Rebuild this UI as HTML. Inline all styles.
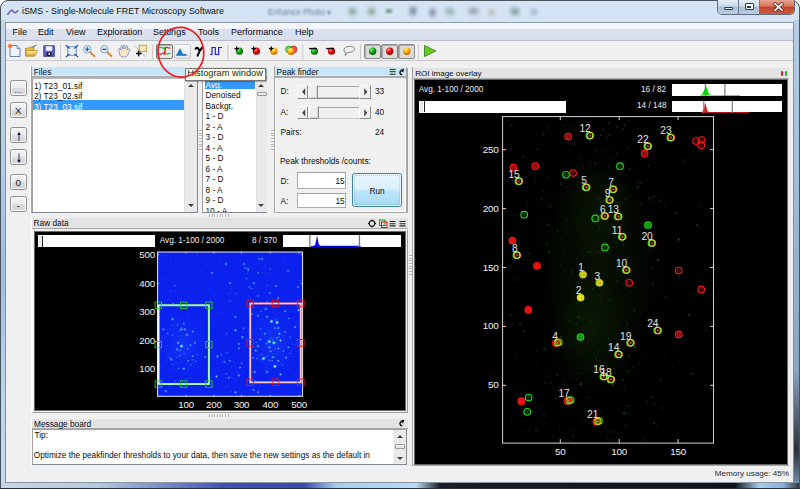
<!DOCTYPE html>
<html><head><meta charset="utf-8">
<style>
*{margin:0;padding:0;box-sizing:border-box}
html,body{width:800px;height:489px;overflow:hidden;background:#fff}
body{position:relative;font-family:"Liberation Sans",sans-serif;font-size:8.2px;color:#000}
.a{position:absolute}
.t{position:absolute;white-space:nowrap;line-height:1}
#win{left:0;top:0;width:800px;height:489px;border-radius:8px 8px 0 0;background:linear-gradient(#d4e4f4 0%,#bfd5ec 100%);border:1px solid #4a525c}
#client{left:5px;top:22px;width:789px;height:460.5px;background:#f0f0f0;border-top:1px solid #8d9aab;border-left:1px solid #7f8ea0;border-right:1px solid #7f8ea0;border-bottom:1px solid #8a96a4}
.menu{left:6px;top:23px;width:787px;height:18px;background:linear-gradient(#f7f8fb 0%,#f3f4f9 35%,#dde2ef 38%,#d9deee 100%);border-bottom:1px solid #b7bcc8}
.mi{top:27.8px;font-size:9.05px;color:#0a0a14}
.tb{left:6px;top:42px;width:787px;height:19px;background:#f0f0f0;border-bottom:1px solid #c9c9c9}
.sep{top:45px;width:1px;height:14px;background:#b6b6b6;border-right:1px solid #fff}
.pbtn{top:43.5px;height:15.5px;border:1px solid #8a8a8a;border-radius:2px;background:#dcdcdc;box-shadow:inset 1px 1px 1px #aaa}
.hbtn{top:43.5px;height:15.5px;border:1px solid #b9b9b9;border-radius:2px;background:linear-gradient(#f6f6f6,#e4e4e4)}
</style></head><body>
<div id="win" class="a"></div>
<div class="a" style="left:1px;top:20px;width:4.5px;height:468px;background:linear-gradient(#c2d8ee 0%,#b4cde8 30%,#9fbddf 55%,#b9d2ec 75%,#c6dcf0 100%)"></div>
<div class="a" style="left:794px;top:20px;width:5px;height:468px;background:linear-gradient(#b6cfe8 0%,#9fb8d4 40%,#8aa4c2 75%,#2a3038 92%,#7e9ab8 100%)"></div>
<div class="a" style="left:1px;top:482.5px;width:798px;height:5.5px;background:linear-gradient(90deg,#c8d6e4 0%,#b8c8dc 12%,#4050b8 28%,#3848b0 38%,#a8cdf0 42%,#b8daf6 52%,#1a1e24 55%,#101418 92%,#a8cdf0 95%,#8ab0d8 98%,#303840 100%)"></div>
<div class="a" style="left:0;top:487.5px;width:800px;height:1.5px;background:#2a3038"></div>
<!-- title -->
<div class="a" style="left:0;top:0;width:800px;height:22px;overflow:hidden">
<div class="t" style="left:268px;top:7.5px;font-size:8.3px;color:#6a7a92;filter:blur(1.1px)">Enhance Photo ▾</div>
<div class="a" style="left:349px;top:8px;width:7px;height:7px;border-radius:3px;background:#4a7a50;filter:blur(1.9px);opacity:.6"></div>
<div class="a" style="left:368px;top:8px;width:7px;height:7px;border-radius:3px;background:#5a7a40;filter:blur(1.9px);opacity:.6"></div>
<div class="a" style="left:386px;top:9px;width:6px;height:4px;background:#7aa080;filter:blur(1px)"></div>
<div class="a" style="left:410px;top:7px;width:6px;height:8px;background:#3a4a5a;filter:blur(1.9px);opacity:.6"></div>
<div class="a" style="left:430px;top:9px;width:5px;height:7px;background:#303848;filter:blur(1.9px);opacity:.6"></div>
<div class="a" style="left:446px;top:8px;width:8px;height:7px;background:#6a9a80;filter:blur(1.9px);opacity:.6"></div>
<div class="a" style="left:469px;top:8px;width:9px;height:6px;background:#6a7080;filter:blur(1.9px);opacity:.6"></div>
<div class="a" style="left:489px;top:10px;width:5px;height:5px;background:#a08060;filter:blur(1.9px);opacity:.6"></div>
<div class="a" style="left:511px;top:8px;width:8px;height:7px;background:#4a7a60;filter:blur(1.9px);opacity:.6"></div>
<div class="a" style="left:531px;top:9px;width:6px;height:6px;border-radius:3px;background:#6080a0;filter:blur(1.9px);opacity:.6"></div>
</div>

<svg class="a" style="left:6.5px;top:6.5px" width="14" height="10" viewBox="0 0 14 10"><path d="M0.8 7.3 L4 3.6 Q5 2.6 6 4 Q7.3 6.3 8.8 5.4 L10.8 3.8" fill="none" stroke="#6a58a8" stroke-width="1.5" stroke-linecap="round"/></svg>
<div class="t" style="left:22px;top:6.6px;font-size:8.85px;color:#111">iSMS - Single-Molecule FRET Microscopy Software</div>
<!-- caption buttons -->
<div class="a" style="left:717px;top:0;width:78px;height:15px;border:1px solid #5e6c7e;border-top:none;border-radius:0 0 5px 5px;overflow:hidden;box-shadow:0 0 1px rgba(255,255,255,.6)">
  <div class="a" style="left:0;top:0;width:21px;height:14px;background:linear-gradient(#e4edf6 0%,#c9d8e8 45%,#a9bed6 50%,#b7cde4 100%);border-right:1px solid #6a7a8c"></div>
  <div class="a" style="left:21px;top:0;width:21px;height:14px;background:linear-gradient(#e4edf6 0%,#c9d8e8 45%,#a9bed6 50%,#b7cde4 100%);border-right:1px solid #6a7a8c"></div>
  <div class="a" style="left:42px;top:0;width:36px;height:14px;background:linear-gradient(#eaa595 0%,#d8735e 45%,#c4432a 50%,#cf5a40 100%)"></div>
  <div class="a" style="left:6px;top:6.5px;width:9px;height:3.5px;background:#fff;border:1px solid #2e3d52;border-radius:1px"></div>
  <div class="a" style="left:26.5px;top:3px;width:9px;height:7px;border:1px solid #2e3d52;background:#fff;border-radius:1px"><div class="a" style="left:1.5px;top:1.5px;width:4px;height:2.5px;border:1px solid #2e3d52;background:#e8eef6"></div></div>
  <svg class="a" style="left:54px;top:2px" width="13" height="10" viewBox="0 0 13 10"><path d="M3 1.8 L10 8.2 M10 1.8 L3 8.2" stroke="#4a2018" stroke-width="3.2" stroke-linecap="square"/><path d="M3 1.8 L10 8.2 M10 1.8 L3 8.2" stroke="#fff" stroke-width="1.8" stroke-linecap="square"/></svg>
</div>
<div id="client" class="a"></div>
<!-- menu -->
<div class="a menu"></div>
<div class="t mi" style="left:12.5px">File</div>
<div class="t mi" style="left:38px">Edit</div>
<div class="t mi" style="left:66px">View</div>
<div class="t mi" style="left:97px">Exploration</div>
<div class="t mi" style="left:153px">Settings</div>
<div class="t mi" style="left:198px">Tools</div>
<div class="t mi" style="left:231px">Performance</div>
<div class="t mi" style="left:295px">Help</div>
<!-- toolbar -->
<div class="a tb"></div>

<div class="a pbtn" style="left:156.3px;width:17px;border:1.5px solid #767676;background:#e9ecef"></div>
<div class="a hbtn" style="left:174px;width:17px;border-color:#cacaca;background:linear-gradient(#fbfbfb,#e6e6e6)"></div>
<div class="a pbtn" style="left:364.3px;width:17px"></div>
<div class="a pbtn" style="left:381.3px;width:17px"></div>
<div class="a pbtn" style="left:398.3px;width:17px"></div>
<svg class="a" style="left:0;top:40px" width="450" height="22" viewBox="0 40 450 22">
<defs>
 <radialGradient id="gg" cx="35%" cy="30%" r="70%"><stop offset="0" stop-color="#8ef08e"/><stop offset=".45" stop-color="#12b512"/><stop offset="1" stop-color="#045c04"/></radialGradient>
 <radialGradient id="rg" cx="35%" cy="30%" r="70%"><stop offset="0" stop-color="#ff9c9c"/><stop offset=".45" stop-color="#ee1010"/><stop offset="1" stop-color="#8a0000"/></radialGradient>
 <radialGradient id="og" cx="40%" cy="25%" r="75%"><stop offset="0" stop-color="#fff2a0"/><stop offset=".5" stop-color="#ffb000"/><stop offset="1" stop-color="#c05800"/></radialGradient>
 <linearGradient id="fold" x1="0" y1="0" x2="0" y2="1"><stop offset="0" stop-color="#fff0a8"/><stop offset="1" stop-color="#d9a520"/></linearGradient>
</defs>
<!-- new doc -->
<path d="M10 45.5 H17 L20 48.5 V56.5 H10 Z" fill="#eef4fc" stroke="#6a7fb8" stroke-width="1"/>
<path d="M17 45.5 V48.5 H20" fill="#c8d6f0" stroke="#6a7fb8" stroke-width=".8"/>
<circle cx="10" cy="46" r="1.8" fill="#ff7a30"/>
<path d="M7.5 46 H12.5 M10 43.5 V48.5 M8.2 44.2 L11.8 47.8 M11.8 44.2 L8.2 47.8" stroke="#ff6a20" stroke-width=".6"/>
<!-- folder -->
<path d="M25.5 48 H29 L30 47 H34 V56 H25.5 Z" fill="#e2b838" stroke="#b08418" stroke-width=".7"/>
<path d="M26.5 50.5 H37.5 L35 56 H25.5 Z" fill="url(#fold)" stroke="#b08418" stroke-width=".7"/>
<path d="M32.5 47 L36.5 45" stroke="#3a6ab0" stroke-width="1"/>
<!-- save -->
<rect x="43.8" y="45.8" width="10.5" height="10.5" fill="#5b5fc8" stroke="#2e2f80" stroke-width=".8"/>
<rect x="45.8" y="46.3" width="6.5" height="4.5" fill="#f4f4ff"/>
<rect x="46.5" y="52.5" width="5" height="3.5" fill="#222"/>
<rect x="48.5" y="53" width="1.5" height="2" fill="#ddd"/>
<!-- sep -->
<rect x="60.5" y="44.5" width="1" height="15" fill="#b0b0b0"/><rect x="61.5" y="44.5" width="1" height="15" fill="#fff"/>
<!-- zoom fit -->
<rect x="67.5" y="46.5" width="9" height="9" fill="#c9dbf2" stroke="#7d99c9" stroke-width=".8"/>
<rect x="69" y="48" width="6" height="6" fill="#e8f0fb"/>
<path d="M65.8 45.2 L69.5 48.5 M78 45.2 L74.5 48.5 M65.8 57.2 L69.5 53.8 M78 57.2 L74.5 53.8" stroke="#1c3a78" stroke-width="1.1"/>
<!-- zoom in -->
<path d="M90.2 52.3 L94.3 56" stroke="#e08a30" stroke-width="2.2" stroke-linecap="round"/>
<circle cx="87.3" cy="49.3" r="3.8" fill="#d8e8f8" stroke="#8fa4c8" stroke-width="1"/>
<path d="M85.3 49.3 H89.3 M87.3 47.3 V51.3" stroke="#1f3c88" stroke-width="1.1"/>
<!-- zoom out -->
<path d="M107.3 52.3 L111.4 56" stroke="#e08a30" stroke-width="2.2" stroke-linecap="round"/>
<circle cx="104.4" cy="49.3" r="3.8" fill="#d8e8f8" stroke="#8fa4c8" stroke-width="1"/>
<path d="M102.4 49.3 H106.4" stroke="#1f3c88" stroke-width="1.1"/>
<!-- hand -->
<path d="M119 50.5 Q118.5 48 120.2 48.5 L121 50 L120.8 46.5 Q121.5 45.2 122.5 46.3 L123 49 L123.3 45.5 Q124.3 44.6 125 45.7 L125.2 49 L126 46.3 Q127 45.6 127.6 46.6 L127.4 50 L128.5 48.8 Q130 48.5 129.8 50 L127.5 55.5 Q126.5 57 124 57 L122 57 Q120 56.5 119.5 54 Z" fill="#fbe3c4" stroke="#6a8ad0" stroke-width=".8"/>
<!-- select tool -->
<rect x="139.2" y="45.2" width="7.5" height="6.5" fill="#eee8b0" stroke="#b0a050" stroke-width=".8"/>
<path d="M135.5 46.5 L145.5 57" stroke="#4c5cd8" stroke-width=".7" stroke-dasharray="1.2 .8"/>
<path d="M136 53.5 H141.5 M138.7 50.8 V56.2" stroke="#000" stroke-width="1.3"/>
<!-- sep -->
<rect x="152.5" y="44.5" width="1" height="15" fill="#b0b0b0"/><rect x="153.5" y="44.5" width="1" height="15" fill="#fff"/>
<!-- red/green trace icon -->
<path d="M159.2 47.8 Q160.5 46.8 161.8 47.8 Q163 48.6 164.2 47.6 L165.6 53.8 Q167 54.6 168.3 53.8 Q169.5 53 170.2 54" fill="none" stroke="#10d010" stroke-width="1.3"/>
<path d="M159.2 53.8 Q160.5 54.6 161.8 53.8 Q163 53 164.2 54 L165.6 47.8 Q167 46.8 168.3 47.8 Q169.5 48.6 170.2 47.6" fill="none" stroke="#f01818" stroke-width="1.3"/>
<path d="M159.5 50.8 H170" stroke="#e8d8f0" stroke-width=".8" stroke-dasharray=".9 .9"/>
<!-- histogram icon -->
<path d="M175.8 55.8 L178 52 L180 47.9 L181.2 50.5 L182.6 53.3 L184 54.3 L185.4 53.8 L186.5 54.8 L187.8 55.8 Z" fill="#1478c8"/>
<!-- gamma -->
<path d="M195.6 48.8 Q197.2 46.6 198.6 49.2 L199.6 51.2 L202.3 47.2 M199.6 51.2 L197.6 55.6" fill="none" stroke="#000" stroke-width="2" stroke-linecap="round"/>
<!-- square wave -->
<path d="M210 54.5 H212 V47.5 H215.3 V54.5 H218.6 V47.5 H222" fill="none" stroke="#2020f0" stroke-width="1.2"/>
<!-- sep -->
<rect x="227.7" y="44.5" width="1" height="15" fill="#b0b0b0"/><rect x="228.7" y="44.5" width="1" height="15" fill="#fff"/>
<!-- balls plus -->
<circle cx="239.4" cy="51.2" r="3.6" fill="url(#gg)"/>
<path d="M234.5 48.6 H239 M236.7 46.4 V50.8" stroke="#000" stroke-width="1.4"/>
<circle cx="256.4" cy="51.2" r="3.6" fill="url(#rg)"/>
<path d="M251.5 48.6 H256 M253.7 46.4 V50.8" stroke="#000" stroke-width="1.4"/>
<circle cx="273.9" cy="51.2" r="3.6" fill="url(#og)"/>
<path d="M269 48.6 H273.5 M271.2 46.4 V50.8" stroke="#000" stroke-width="1.4"/>
<!-- overlap -->
<circle cx="288.8" cy="49.4" r="3.4" fill="#5ad85a" stroke="#1a9a1a" stroke-width=".6"/>
<circle cx="293.6" cy="49.4" r="3.4" fill="#f05050" stroke="#b01010" stroke-width=".6"/>
<circle cx="291" cy="51.6" r="3.5" fill="url(#og)"/>
<!-- sep -->
<rect x="302.5" y="44.5" width="1" height="15" fill="#b0b0b0"/><rect x="303.5" y="44.5" width="1" height="15" fill="#fff"/>
<!-- balls minus -->
<circle cx="314.4" cy="51.2" r="3.6" fill="url(#gg)"/>
<path d="M309.2 48.6 H317" stroke="#000" stroke-width="1.4"/>
<circle cx="331.5" cy="51.2" r="3.6" fill="url(#rg)"/>
<path d="M326.2 48.6 H334" stroke="#000" stroke-width="1.4"/>
<!-- bubble -->
<path d="M346 53 Q343 51.5 344.2 48.7 Q346 46 350.5 46.2 Q354.5 46.6 354.7 48.6 Q354.6 51.5 350 52.3 L347.5 52.6 L345.2 55.7 Z" fill="none" stroke="#7b7b7b" stroke-width=".9"/>
<!-- sep -->
<rect x="360.4" y="44.5" width="1" height="15" fill="#b0b0b0"/><rect x="361.4" y="44.5" width="1" height="15" fill="#fff"/>
<circle cx="372.6" cy="51.2" r="3.7" fill="url(#gg)"/>
<circle cx="389.7" cy="51.2" r="3.7" fill="url(#rg)"/>
<circle cx="406.8" cy="51.2" r="3.7" fill="url(#og)"/>
<!-- sep -->
<rect x="418.5" y="44.5" width="1" height="15" fill="#b0b0b0"/><rect x="419.5" y="44.5" width="1" height="15" fill="#fff"/>
<!-- play -->
<path d="M424.5 45.5 L435.8 51 L424.5 56.5 Z" fill="#66cc22" stroke="#2f7a10" stroke-width=".8"/>
</svg>


<style>
.btn{position:absolute;left:10px;width:16.5px;height:16px;border:1px solid #8e8e8e;border-radius:2.5px;background:linear-gradient(#f3f3f3 0%,#ececec 50%,#dddddd 51%,#d3d3d3 100%);box-shadow:inset 0 0 0 1px #fcfcfc}
.btn span{position:absolute;left:0;right:0;text-align:center;line-height:1;font-size:8px;color:#1a1a1a}
.pl{position:absolute;border-left:1px solid #a0a0a0;border-top:1px solid #fff}
.hb{position:absolute;background:linear-gradient(#c8e5f8 0,#c8e5f8 8.4px,#d6f0fb 8.4px,#d6f0fb 9.3px,#a4a8ac 9.3px,#b0b4b8 11px)}
.hg{position:absolute;background:#e3e3e3;height:9.5px;border-bottom:1.5px solid #a8a8a8}
.ht{position:absolute;white-space:nowrap;line-height:1;font-size:8.3px;color:#0c0c18}
.lst{position:absolute;background:#fff;border:1px solid #828790;border-left:1px solid #a0a0a0;border-top:none}
.li{position:absolute;white-space:nowrap;line-height:1;font-size:8.3px;color:#0c0c0c}
.sb{position:absolute;background:#eaeaea;border-left:1px solid #e0e0e0}
.arr{position:absolute;width:0;height:0;border-left:3px solid transparent;border-right:3px solid transparent}
.up{border-bottom:3px solid #404040}
.dn{border-top:3px solid #404040}
.blk{position:absolute;background:#000}
.wt{position:absolute;white-space:nowrap;line-height:1;font-size:8.2px;color:#f0f0f0}
</style>
<!-- left buttons -->
<div class="btn" style="top:79.6px"><span style="top:6px;letter-spacing:.3px">...</span></div>
<div class="btn" style="top:101.5px"><span style="top:3.6px;font-size:9.6px">X</span></div>
<div class="btn" style="top:127.3px"><svg class="a" style="left:3.5px;top:2px" width="8" height="12"><path d="M4 11 V4" stroke="#2a1a50" stroke-width=".9"/><path d="M2.2 5 L4 1.8 L5.8 5 Z" fill="#101030"/></svg></div>
<div class="btn" style="top:148.6px"><svg class="a" style="left:3.5px;top:2px" width="8" height="12"><path d="M4 1.5 V8.5" stroke="#2a1a50" stroke-width=".9"/><path d="M2.2 7.8 L4 11 L5.8 7.8 Z" fill="#101030"/></svg></div>
<div class="btn" style="top:174.3px"><span style="top:3.2px;font-size:10px">o</span></div>
<div class="btn" style="top:196.4px"><span style="top:4px;font-size:9.5px">-</span></div>

<!-- Files panel -->
<div class="a" style="left:30px;top:66px;width:1px;height:147px;background:#fff"></div>
<div class="a" style="left:31px;top:66px;width:1px;height:147px;background:#a6a6a6"></div>
<div class="hb" style="left:32px;top:67px;width:152.5px;height:11px"></div>
<div class="ht" style="left:33.8px;top:68.4px">Files</div>
<div class="lst" style="left:32px;top:78px;width:165.5px;height:134.5px;border-top:1px solid #b8b8b8"></div>
<div class="a" style="left:33px;top:99.8px;width:151px;height:10.5px;background:#3399ff"></div>
<div class="li" style="left:34px;top:81.5px">1) T23_01.sif</div>
<div class="li" style="left:34px;top:92px">2) T23_02.sif</div>
<div class="li" style="left:34px;top:102.5px;color:#fff">3) T23_03.sif</div>
<div class="sb" style="left:184.3px;top:78.5px;width:12.5px;height:133px"></div>
<div class="arr up" style="left:187.5px;top:84px"></div>
<div class="arr dn" style="left:187.5px;top:204px"></div>

<!-- splitter grips -->
<div class="a" style="left:199.2px;top:129.6px;width:3px;height:21.5px;background:repeating-linear-gradient(#b4b4b4 0 1px,#fafafa 1px 1.6px,transparent 1.6px 2.7px)"></div>
<div class="a" style="left:270.6px;top:129.6px;width:3px;height:21.5px;background:repeating-linear-gradient(#b4b4b4 0 1px,#fafafa 1px 1.6px,transparent 1.6px 2.7px)"></div>
<div class="a" style="left:408.5px;top:255.3px;width:3px;height:22px;background:repeating-linear-gradient(#b4b4b4 0 1px,#fafafa 1px 1.6px,transparent 1.6px 2.7px)"></div>

<!-- Histogram list panel -->
<div class="a" style="left:202px;top:66px;width:1px;height:147px;background:#a6a6a6"></div>
<div class="hb" style="left:203px;top:67px;width:64px;height:11px"></div>
<div class="lst" style="left:202px;top:78px;width:65px;height:134.5px;border-top:1px solid #b8b8b8"></div>
<div class="a" style="left:204.8px;top:79.3px;width:50.5px;height:10.2px;background:#3399ff"></div>
<div class="li" style="left:205.5px;top:80.5px;color:#fff">Avg.</div>
<div class="li" style="left:205.5px;top:91px">Denoised</div>
<div class="li" style="left:205.5px;top:101.5px">Backgr.</div>
<div class="li" style="left:205.5px;top:112px">1 - D</div>
<div class="li" style="left:205.5px;top:122.5px">2 - A</div>
<div class="li" style="left:205.5px;top:133px">3 - D</div>
<div class="li" style="left:205.5px;top:143.5px">4 - A</div>
<div class="li" style="left:205.5px;top:154px">5 - D</div>
<div class="li" style="left:205.5px;top:164.5px">6 - A</div>
<div class="li" style="left:205.5px;top:175px">7 - D</div>
<div class="li" style="left:205.5px;top:185.5px">8 - A</div>
<div class="li" style="left:205.5px;top:196px">9 - D</div>
<div class="a" style="left:203px;top:206px;width:52px;height:5.5px;overflow:hidden"><div class="li" style="left:2.5px;top:0.5px">10 - A</div></div>
<div class="sb" style="left:255.5px;top:78.5px;width:11px;height:133px"></div>
<div class="arr up" style="left:258px;top:84px"></div>
<div class="a" style="left:256.5px;top:91.5px;width:10px;height:4.5px;border:1px solid #9a9a9a;border-radius:1px;background:linear-gradient(#f8f8f8,#dcdcdc)"></div>
<div class="arr dn" style="left:258px;top:204px"></div>

<!-- tooltip -->
<div class="a" style="left:184.7px;top:67.6px;width:81.5px;height:13.2px;background:#fffee6;border:1px solid #767676;box-shadow:1px 1px 1px rgba(0,0,0,.25)"></div>
<div class="t" style="left:187.3px;top:69.2px;font-size:9.25px;color:#1e1e1e">Histogram window</div>

<!-- Peak finder -->
<div class="a" style="left:274px;top:66px;width:1px;height:147px;background:#a6a6a6"></div>
<div class="hb" style="left:275px;top:67px;width:131.5px;height:11px"></div>
<div class="a" style="left:406.4px;top:68px;width:1.2px;height:144.5px;background:#a4a4a4"></div>
<div class="ht" style="left:276.6px;top:68.2px">Peak finder</div>
<svg class="a" style="left:385px;top:64px" width="25" height="16" viewBox="385 64 25 16">
<path d="M389.7 69.4 H395.6 M389.7 71.7 H395.6 M389.7 74.2 H395.6" stroke="#1c2a1c" stroke-width="1"/>
<path d="M389.7 70.3 H395.6 M389.7 72.6 H395.6" stroke="#a0d8a0" stroke-width=".5"/>
<path d="M402.2 74.8 Q399.2 74 400.2 71.6 L401.6 70.4" fill="none" stroke="#000" stroke-width="1.3"/>
<path d="M400.3 69.7 L404.1 68.7 L403.2 72.6 Z" fill="#000"/>
</svg>
<div class="a" style="left:275px;top:77.5px;width:131.5px;height:135px;border:1px solid #a0a0a0;border-top:none;border-left:1px solid #fcfcfc;border-right:1px solid #a8a8a8;border-bottom:1px solid #a8a8a8;box-shadow:inset -1px -1px 0 #fff"></div>
<div class="li" style="left:280.5px;top:87px">D:</div>
<div class="li" style="left:280.5px;top:107.5px">A:</div>
<div class="li" style="left:280.5px;top:127.5px">Pairs:</div>
<div class="li" style="left:375px;top:87px">33</div>
<div class="li" style="left:375px;top:107.5px">40</div>
<div class="li" style="left:375px;top:127.5px">24</div>

<div class="a" style="left:297.4px;top:85.2px;width:73.3px;height:13.5px;border-bottom:1.3px solid #8c8c8c"></div>
<div class="a" style="left:317px;top:86.0px;width:42.5px;height:12px;border-top:1.2px solid #a4a4a4;border-bottom:1px solid #c8c8c8"></div>
<div class="a" style="left:297.4px;top:85.2px;width:11px;height:13.5px;border-top:1px solid #fcfcfc;border-left:1px solid #fcfcfc;border-right:1.3px solid #8c8c8c;border-bottom:1.3px solid #8c8c8c;background:#efefef"></div>
<div class="a" style="left:308.1px;top:85.2px;width:9.5px;height:13.5px;border-top:1px solid #fcfcfc;border-left:1px solid #fcfcfc;border-right:1.3px solid #8c8c8c;border-bottom:1.3px solid #8c8c8c;background:#efefef;box-shadow:inset -1px -1px 0 #d4d4d4"></div>
<div class="a" style="left:359.2px;top:85.2px;width:11.5px;height:13.5px;border-top:1px solid #fcfcfc;border-left:1px solid #fcfcfc;border-right:1.3px solid #8c8c8c;border-bottom:1.3px solid #8c8c8c;background:#efefef"></div>
<svg class="a" style="left:300px;top:85.2px" width="8" height="14"><path d="M5.2 3.2 L2.2 6.8 L5.2 10.4 Z" fill="#404040"/></svg>
<svg class="a" style="left:362px;top:85.2px" width="8" height="14"><path d="M2.3 3.2 L5.3 6.8 L2.3 10.4 Z" fill="#404040"/></svg>

<div class="a" style="left:297.4px;top:105.7px;width:73.3px;height:13.5px;border-bottom:1.3px solid #8c8c8c"></div>
<div class="a" style="left:317px;top:106.5px;width:42.5px;height:12px;border-top:1.2px solid #a4a4a4;border-bottom:1px solid #c8c8c8"></div>
<div class="a" style="left:297.4px;top:105.7px;width:11px;height:13.5px;border-top:1px solid #fcfcfc;border-left:1px solid #fcfcfc;border-right:1.3px solid #8c8c8c;border-bottom:1.3px solid #8c8c8c;background:#efefef"></div>
<div class="a" style="left:309.2px;top:105.7px;width:9.5px;height:13.5px;border-top:1px solid #fcfcfc;border-left:1px solid #fcfcfc;border-right:1.3px solid #8c8c8c;border-bottom:1.3px solid #8c8c8c;background:#efefef;box-shadow:inset -1px -1px 0 #d4d4d4"></div>
<div class="a" style="left:359.2px;top:105.7px;width:11.5px;height:13.5px;border-top:1px solid #fcfcfc;border-left:1px solid #fcfcfc;border-right:1.3px solid #8c8c8c;border-bottom:1.3px solid #8c8c8c;background:#efefef"></div>
<svg class="a" style="left:300px;top:105.7px" width="8" height="14"><path d="M5.2 3.2 L2.2 6.8 L5.2 10.4 Z" fill="#404040"/></svg>
<svg class="a" style="left:362px;top:105.7px" width="8" height="14"><path d="M2.3 3.2 L5.3 6.8 L2.3 10.4 Z" fill="#404040"/></svg>

<div class="li" style="left:280px;top:156.6px">Peak thresholds /counts:</div>
<div class="li" style="left:280.5px;top:176.5px">D:</div>
<div class="li" style="left:280.5px;top:196.5px">A:</div>
<div class="a" style="left:297.2px;top:172.3px;width:49.3px;height:16.3px;background:#fff;border:1px solid #abadb3;border-top-color:#a0a0a0"></div>
<div class="a" style="left:297.2px;top:192.6px;width:49.3px;height:15.9px;background:#fff;border:1px solid #abadb3;border-top-color:#a0a0a0"></div>
<div class="li" style="left:335.5px;top:176.5px">15</div>
<div class="li" style="left:335.5px;top:196.5px">15</div>
<div class="a" style="left:351.6px;top:172.6px;width:50.4px;height:34.8px;border:1px solid #3c7fb1;border-radius:2.5px;background:linear-gradient(#eaf6fd 0%,#d9f0fc 48%,#bee6fd 50%,#a7d9f5 100%);box-shadow:inset 0 0 0 1px #e8f4fc"></div>
<div class="a" style="left:353.6px;top:174.6px;width:46.4px;height:30.8px;border:1px dotted rgba(60,70,80,.25)"></div>
<div class="li" style="left:369.5px;top:186.5px">Run</div>


<!-- horizontal splitter grips -->
<div class="a" style="left:209px;top:214.3px;width:22px;height:3px;background:repeating-linear-gradient(90deg,#b4b4b4 0 1px,#fafafa 1px 1.6px,transparent 1.6px 2.7px)"></div>
<div class="a" style="left:209px;top:414.2px;width:22px;height:3px;background:repeating-linear-gradient(90deg,#b4b4b4 0 1px,#fafafa 1px 1.6px,transparent 1.6px 2.7px)"></div>

<!-- Raw data -->
<div class="a" style="left:30.6px;top:217.5px;width:1px;height:195px;background:#fff"></div>
<div class="hg" style="left:31.6px;top:218px;width:376px;height:10.5px"></div>
<div class="ht" style="left:33.6px;top:219.4px">Raw data</div>
<svg class="a" style="left:366px;top:218.5px" width="42" height="9">
<circle cx="6" cy="4.5" r="2.8" fill="none" stroke="#111" stroke-width="1.2"/><path d="M6 0.5 V2 M6 7 V8.5 M2 4.5 H3.5 M8.5 4.5 H10" stroke="#111" stroke-width="1"/>
<rect x="13.5" y="1" width="5.5" height="5.5" fill="none" stroke="#1aa01a" stroke-width="1"/><rect x="15.5" y="3" width="5.5" height="5.5" fill="none" stroke="#e01010" stroke-width="1"/>
<path d="M23.5 2.5 H29.5 M23.5 4.7 H29.5 M23.5 6.9 H29.5 M33.5 2.5 H39.5 M33.5 4.7 H39.5 M33.5 6.9 H39.5" stroke="#1f2f1f" stroke-width="1.1"/>
</svg>
<div class="a" style="left:32px;top:229.5px;width:376px;height:183px;border-left:1px solid #fff;border-right:1px solid #a0a0a0;border-bottom:1px solid #a0a0a0"></div>
<div class="blk" style="left:33.5px;top:230.8px;width:372.3px;height:180px;border:1px solid #6a6a6a"></div>
<div class="a" style="left:37.5px;top:235.3px;width:117.5px;height:11.7px;background:#fff"></div>
<div class="a" style="left:42px;top:235.5px;width:1.2px;height:11.5px;background:#222"></div>
<div class="a" style="left:38.5px;top:236px;width:3.5px;height:10px;background:#e8e8e8"></div>
<div class="wt" style="left:159.8px;top:237px">Avg. 1-100 / 2000</div>
<div class="wt" style="left:252px;top:237px">8 / 370</div>
<div class="a" style="left:283px;top:235.3px;width:117.5px;height:11.7px;background:#fff"></div>
<svg class="a" style="left:283px;top:235.3px" width="118" height="12" viewBox="0 0 118 12">
<path d="M28 11 L31 10.8 L32.2 9.5 L33.2 5 L34.1 0.5 L35 5 L35.8 9 L37 10.7 L39 10.8 L77.6 10.8 L77.6 12 L28 12 Z" fill="#0c0ce8"/>
<rect x="26.2" y="0" width="1.3" height="12" fill="#7a7a7a"/><rect x="75.8" y="0" width="1.3" height="12" fill="#7a7a7a"/>
</svg>
<!--RAWIMG-->
<svg class="a" style="left:0;top:0" width="800" height="489" viewBox="0 0 800 489">
<defs><radialGradient id="sp"><stop offset="0" stop-color="#80e8ff"/><stop offset=".45" stop-color="#3890ff" stop-opacity=".75"/><stop offset="1" stop-color="#2050ff" stop-opacity="0"/></radialGradient><radialGradient id="spb"><stop offset="0" stop-color="#f0f060"/><stop offset=".3" stop-color="#60f0c0"/><stop offset=".65" stop-color="#3090ff" stop-opacity=".7"/><stop offset="1" stop-color="#2050ff" stop-opacity="0"/></radialGradient><radialGradient id="hz" cx="50%" cy="50%" r="50%"><stop offset="0" stop-color="#2050ff"/><stop offset="1" stop-color="#0a20f0" stop-opacity="0"/></radialGradient></defs>
<rect x="157.6" y="252.0" width="145.00000000000003" height="144.3" fill="#0b22ee"/>
<ellipse cx="183" cy="345" rx="28" ry="40" fill="url(#hz)" opacity=".45"/><ellipse cx="272" cy="342" rx="30" ry="42" fill="url(#hz)" opacity=".45"/>
<circle cx="179.9" cy="355.7" r="1.5" fill="url(#sp)" opacity=".75"/>
<circle cx="204.3" cy="356.6" r="1.1" fill="url(#sp)" opacity=".75"/>
<circle cx="180.2" cy="350.4" r="1.5" fill="url(#sp)" opacity=".75"/>
<circle cx="184.1" cy="353.7" r="1.3" fill="url(#sp)" opacity=".75"/>
<circle cx="187.7" cy="348.9" r="1.3" fill="url(#sp)" opacity=".75"/>
<circle cx="197.4" cy="354.8" r="1.1" fill="url(#sp)" opacity=".75"/>
<circle cx="172.2" cy="324.7" r="1.1" fill="url(#sp)" opacity=".75"/>
<circle cx="172.3" cy="335.2" r="1.1" fill="url(#sp)" opacity=".75"/>
<circle cx="205.7" cy="357.0" r="1.3" fill="url(#sp)" opacity=".75"/>
<circle cx="169.9" cy="357.7" r="1.5" fill="url(#sp)" opacity=".75"/>
<circle cx="175.1" cy="381.1" r="1.1" fill="url(#sp)" opacity=".75"/>
<circle cx="195.5" cy="361.5" r="1.1" fill="url(#sp)" opacity=".75"/>
<circle cx="172.5" cy="364.0" r="1.1" fill="url(#sp)" opacity=".75"/>
<circle cx="167.7" cy="333.5" r="1.3" fill="url(#sp)" opacity=".75"/>
<circle cx="177.6" cy="324.9" r="1.3" fill="url(#sp)" opacity=".75"/>
<circle cx="177.1" cy="357.1" r="1.1" fill="url(#sp)" opacity=".75"/>
<circle cx="180.2" cy="330.1" r="1.5" fill="url(#sp)" opacity=".75"/>
<circle cx="178.6" cy="368.3" r="1.3" fill="url(#sp)" opacity=".75"/>
<circle cx="181.7" cy="327.8" r="1.1" fill="url(#sp)" opacity=".75"/>
<circle cx="192.2" cy="359.8" r="1.3" fill="url(#sp)" opacity=".75"/>
<circle cx="191.0" cy="364.9" r="1.1" fill="url(#sp)" opacity=".75"/>
<circle cx="276.7" cy="338.0" r="1.5" fill="url(#sp)" opacity=".75"/>
<circle cx="250.0" cy="321.0" r="1.3" fill="url(#sp)" opacity=".75"/>
<circle cx="266.0" cy="356.5" r="1.3" fill="url(#sp)" opacity=".75"/>
<circle cx="260.4" cy="328.8" r="1.1" fill="url(#sp)" opacity=".75"/>
<circle cx="284.8" cy="331.9" r="1.5" fill="url(#sp)" opacity=".75"/>
<circle cx="289.9" cy="353.5" r="1.3" fill="url(#sp)" opacity=".75"/>
<circle cx="249.2" cy="287.1" r="1.3" fill="url(#sp)" opacity=".75"/>
<circle cx="269.4" cy="360.2" r="1.5" fill="url(#sp)" opacity=".75"/>
<circle cx="255.7" cy="380.9" r="1.3" fill="url(#sp)" opacity=".75"/>
<circle cx="274.9" cy="349.1" r="1.1" fill="url(#sp)" opacity=".75"/>
<circle cx="274.0" cy="356.9" r="1.5" fill="url(#sp)" opacity=".75"/>
<circle cx="272.2" cy="360.9" r="1.3" fill="url(#sp)" opacity=".75"/>
<circle cx="283.5" cy="351.1" r="1.5" fill="url(#sp)" opacity=".75"/>
<circle cx="270.9" cy="351.2" r="1.3" fill="url(#sp)" opacity=".75"/>
<circle cx="278.4" cy="327.2" r="1.3" fill="url(#sp)" opacity=".75"/>
<circle cx="290.1" cy="337.3" r="1.3" fill="url(#sp)" opacity=".75"/>
<circle cx="278.6" cy="336.8" r="1.1" fill="url(#sp)" opacity=".75"/>
<circle cx="282.2" cy="365.1" r="1.1" fill="url(#sp)" opacity=".75"/>
<circle cx="256.1" cy="342.6" r="1.3" fill="url(#sp)" opacity=".75"/>
<circle cx="270.7" cy="351.5" r="1.5" fill="url(#sp)" opacity=".75"/>
<circle cx="261.4" cy="359.9" r="1.1" fill="url(#sp)" opacity=".75"/>
<circle cx="266.7" cy="316.5" r="1.5" fill="url(#sp)" opacity=".75"/>
<circle cx="260.9" cy="311.5" r="1.3" fill="url(#sp)" opacity=".75"/>
<circle cx="288.9" cy="318.4" r="1.5" fill="url(#sp)" opacity=".75"/>
<circle cx="275.5" cy="320.0" r="1.3" fill="url(#sp)" opacity=".75"/>
<circle cx="261.2" cy="354.9" r="1.3" fill="url(#sp)" opacity=".75"/>
<circle cx="276.1" cy="343.0" r="1.1" fill="url(#sp)" opacity=".75"/>
<circle cx="266.6" cy="343.7" r="1.5" fill="url(#sp)" opacity=".75"/>
<circle cx="272.2" cy="340.1" r="1.1" fill="url(#sp)" opacity=".75"/>
<circle cx="243.5" cy="328.3" r="1.5" fill="url(#sp)" opacity=".75"/>
<circle cx="253.1" cy="357.8" r="1.5" fill="url(#sp)" opacity=".75"/>
<circle cx="225.9" cy="373.9" r="1.3" fill="url(#sp)" opacity=".75"/>
<circle cx="226.8" cy="333.7" r="1.1" fill="url(#sp)" opacity=".75"/>
<circle cx="251.5" cy="288.4" r="1.3" fill="url(#sp)" opacity=".75"/>
<circle cx="227.3" cy="352.5" r="1.1" fill="url(#sp)" opacity=".75"/>
<circle cx="241.6" cy="363.2" r="1.3" fill="url(#sp)" opacity=".75"/>
<circle cx="221.3" cy="354.9" r="1.5" fill="url(#sp)" opacity=".75"/>
<circle cx="256.9" cy="358.5" r="1.5" fill="url(#sp)" opacity=".75"/>
<circle cx="226.1" cy="378.0" r="1.1" fill="url(#sp)" opacity=".75"/>
<circle cx="235.4" cy="329.8" r="1.5" fill="url(#sp)" opacity=".75"/>
<circle cx="270.3" cy="269.0" r="1.3" fill="url(#sp)" opacity=".75"/>
<circle cx="174.9" cy="285.5" r="1.3" fill="url(#sp)" opacity=".75"/>
<circle cx="245.1" cy="268.0" r="1.5" fill="url(#sp)" opacity=".75"/>
<circle cx="229.8" cy="301.2" r="1.1" fill="url(#sp)" opacity=".75"/>
<circle cx="259.1" cy="258.8" r="1.5" fill="url(#sp)" opacity=".75"/>
<circle cx="246.6" cy="278.6" r="1.3" fill="url(#sp)" opacity=".75"/>
<circle cx="235.5" cy="293.4" r="1.1" fill="url(#sp)" opacity=".75"/>
<circle cx="248.5" cy="270.3" r="1.1" fill="url(#sp)" opacity=".75"/>
<circle cx="173.3" cy="303.8" r="1.3" fill="url(#sp)" opacity=".75"/>
<circle cx="267.4" cy="285.2" r="1.1" fill="url(#sp)" opacity=".75"/>
<circle cx="267.1" cy="302.1" r="1.3" fill="url(#sp)" opacity=".75"/>
<circle cx="251.9" cy="314.2" r="1.5" fill="url(#sp)" opacity=".75"/>
<circle cx="258.4" cy="272.7" r="1.5" fill="url(#sp)" opacity=".75"/>
<circle cx="207.8" cy="344.5" r=".6" fill="#3a60ff" opacity=".6"/>
<circle cx="278.0" cy="270.1" r=".6" fill="#3a60ff" opacity=".6"/>
<circle cx="214.2" cy="354.2" r=".6" fill="#3a60ff" opacity=".6"/>
<circle cx="187.1" cy="379.5" r=".6" fill="#3a60ff" opacity=".6"/>
<circle cx="220.7" cy="343.5" r=".6" fill="#3a60ff" opacity=".6"/>
<circle cx="171.0" cy="387.6" r=".6" fill="#3a60ff" opacity=".6"/>
<circle cx="261.8" cy="318.9" r=".6" fill="#3a60ff" opacity=".6"/>
<circle cx="264.9" cy="265.1" r=".6" fill="#3a60ff" opacity=".6"/>
<circle cx="181.3" cy="394.3" r=".6" fill="#3a60ff" opacity=".6"/>
<circle cx="162.5" cy="337.1" r=".6" fill="#3a60ff" opacity=".6"/>
<circle cx="225.1" cy="346.3" r=".6" fill="#3a60ff" opacity=".6"/>
<circle cx="246.1" cy="337.8" r=".6" fill="#3a60ff" opacity=".6"/>
<circle cx="226.4" cy="386.4" r=".6" fill="#3a60ff" opacity=".6"/>
<circle cx="180.9" cy="331.0" r=".6" fill="#3a60ff" opacity=".6"/>
<circle cx="161.7" cy="366.7" r=".6" fill="#3a60ff" opacity=".6"/>
<circle cx="262.5" cy="267.6" r=".6" fill="#3a60ff" opacity=".6"/>
<circle cx="265.8" cy="272.8" r=".6" fill="#3a60ff" opacity=".6"/>
<circle cx="299.7" cy="280.7" r=".6" fill="#3a60ff" opacity=".6"/>
<circle cx="283.6" cy="257.0" r=".6" fill="#3a60ff" opacity=".6"/>
<circle cx="189.0" cy="324.3" r=".6" fill="#3a60ff" opacity=".6"/>
<circle cx="267.8" cy="299.4" r=".6" fill="#3a60ff" opacity=".6"/>
<circle cx="236.4" cy="371.7" r=".6" fill="#3a60ff" opacity=".6"/>
<circle cx="167.3" cy="358.3" r=".6" fill="#3a60ff" opacity=".6"/>
<circle cx="287.0" cy="347.3" r=".6" fill="#3a60ff" opacity=".6"/>
<circle cx="275.2" cy="326.5" r=".6" fill="#3a60ff" opacity=".6"/>
<circle cx="276.9" cy="378.0" r=".6" fill="#3a60ff" opacity=".6"/>
<circle cx="177.3" cy="274.6" r=".6" fill="#3a60ff" opacity=".6"/>
<circle cx="231.6" cy="377.2" r=".6" fill="#3a60ff" opacity=".6"/>
<circle cx="269.6" cy="339.6" r=".6" fill="#3a60ff" opacity=".6"/>
<circle cx="269.6" cy="274.3" r=".6" fill="#3a60ff" opacity=".6"/>
<circle cx="178.8" cy="341.1" r=".6" fill="#3a60ff" opacity=".6"/>
<circle cx="175.8" cy="261.8" r=".6" fill="#3a60ff" opacity=".6"/>
<circle cx="256.2" cy="328.5" r=".6" fill="#3a60ff" opacity=".6"/>
<circle cx="227.6" cy="363.5" r=".6" fill="#3a60ff" opacity=".6"/>
<circle cx="284.9" cy="261.1" r=".6" fill="#3a60ff" opacity=".6"/>
<circle cx="186.0" cy="259.0" r=".6" fill="#3a60ff" opacity=".6"/>
<circle cx="172.6" cy="317.3" r=".6" fill="#3a60ff" opacity=".6"/>
<circle cx="162.6" cy="380.2" r=".6" fill="#3a60ff" opacity=".6"/>
<circle cx="167.7" cy="299.3" r=".6" fill="#3a60ff" opacity=".6"/>
<circle cx="297.8" cy="339.3" r=".6" fill="#3a60ff" opacity=".6"/>
<circle cx="187.1" cy="292.4" r=".6" fill="#3a60ff" opacity=".6"/>
<circle cx="231.3" cy="367.9" r=".6" fill="#3a60ff" opacity=".6"/>
<circle cx="231.2" cy="288.2" r=".6" fill="#3a60ff" opacity=".6"/>
<circle cx="233.4" cy="377.7" r=".6" fill="#3a60ff" opacity=".6"/>
<circle cx="291.3" cy="384.3" r=".6" fill="#3a60ff" opacity=".6"/>
<circle cx="286.3" cy="281.8" r=".6" fill="#3a60ff" opacity=".6"/>
<circle cx="222.6" cy="312.3" r=".6" fill="#3a60ff" opacity=".6"/>
<circle cx="214.7" cy="298.0" r=".6" fill="#3a60ff" opacity=".6"/>
<circle cx="254.6" cy="314.0" r=".6" fill="#3a60ff" opacity=".6"/>
<circle cx="189.0" cy="296.1" r=".6" fill="#3a60ff" opacity=".6"/>
<circle cx="176.1" cy="363.6" r=".6" fill="#3a60ff" opacity=".6"/>
<circle cx="292.9" cy="344.6" r=".6" fill="#3a60ff" opacity=".6"/>
<circle cx="211.0" cy="289.0" r=".6" fill="#3a60ff" opacity=".6"/>
<circle cx="178.2" cy="319.6" r=".6" fill="#3a60ff" opacity=".6"/>
<circle cx="265.4" cy="266.4" r=".6" fill="#3a60ff" opacity=".6"/>
<circle cx="285.1" cy="276.2" r=".6" fill="#3a60ff" opacity=".6"/>
<circle cx="254.1" cy="284.8" r=".6" fill="#3a60ff" opacity=".6"/>
<circle cx="259.6" cy="394.5" r=".6" fill="#3a60ff" opacity=".6"/>
<circle cx="216.3" cy="312.9" r=".6" fill="#3a60ff" opacity=".6"/>
<circle cx="209.6" cy="266.1" r=".6" fill="#3a60ff" opacity=".6"/>
<circle cx="210.9" cy="301.1" r=".6" fill="#3a60ff" opacity=".6"/>
<circle cx="224.2" cy="353.1" r=".6" fill="#3a60ff" opacity=".6"/>
<circle cx="213.6" cy="326.6" r=".6" fill="#3a60ff" opacity=".6"/>
<circle cx="200.8" cy="389.7" r=".6" fill="#3a60ff" opacity=".6"/>
<circle cx="174.7" cy="383.7" r=".6" fill="#3a60ff" opacity=".6"/>
<circle cx="191.3" cy="377.7" r=".6" fill="#3a60ff" opacity=".6"/>
<circle cx="170.6" cy="291.7" r=".6" fill="#3a60ff" opacity=".6"/>
<circle cx="288.1" cy="278.8" r=".6" fill="#3a60ff" opacity=".6"/>
<circle cx="266.7" cy="369.7" r=".6" fill="#3a60ff" opacity=".6"/>
<circle cx="280.1" cy="349.2" r=".6" fill="#3a60ff" opacity=".6"/>
<circle cx="293.9" cy="310.8" r=".6" fill="#3a60ff" opacity=".6"/>
<circle cx="235.3" cy="326.3" r=".6" fill="#3a60ff" opacity=".6"/>
<circle cx="229.3" cy="299.5" r=".6" fill="#3a60ff" opacity=".6"/>
<circle cx="198.5" cy="366.8" r=".6" fill="#3a60ff" opacity=".6"/>
<circle cx="184.8" cy="380.4" r=".6" fill="#3a60ff" opacity=".6"/>
<circle cx="197.1" cy="255.4" r=".6" fill="#3a60ff" opacity=".6"/>
<circle cx="171.3" cy="290.1" r=".6" fill="#3a60ff" opacity=".6"/>
<circle cx="245.6" cy="284.6" r=".6" fill="#3a60ff" opacity=".6"/>
<circle cx="196.4" cy="270.3" r=".6" fill="#3a60ff" opacity=".6"/>
<circle cx="160.3" cy="394.5" r=".6" fill="#3a60ff" opacity=".6"/>
<circle cx="218.3" cy="383.3" r=".6" fill="#3a60ff" opacity=".6"/>
<circle cx="247.5" cy="259.1" r=".6" fill="#3a60ff" opacity=".6"/>
<circle cx="260.1" cy="386.5" r=".6" fill="#3a60ff" opacity=".6"/>
<circle cx="297.2" cy="290.3" r=".6" fill="#3a60ff" opacity=".6"/>
<circle cx="184.5" cy="385.7" r=".6" fill="#3a60ff" opacity=".6"/>
<circle cx="248.5" cy="328.6" r=".6" fill="#3a60ff" opacity=".6"/>
<circle cx="188.0" cy="316.4" r=".6" fill="#3a60ff" opacity=".6"/>
<circle cx="254.7" cy="291.5" r=".6" fill="#3a60ff" opacity=".6"/>
<circle cx="273.5" cy="394.5" r=".6" fill="#3a60ff" opacity=".6"/>
<circle cx="163.9" cy="255.6" r=".6" fill="#3a60ff" opacity=".6"/>
<circle cx="230.9" cy="392.2" r=".6" fill="#3a60ff" opacity=".6"/>
<circle cx="232.1" cy="288.0" r=".6" fill="#3a60ff" opacity=".6"/>
<circle cx="222.5" cy="346.7" r=".6" fill="#3a60ff" opacity=".6"/>
<circle cx="251.6" cy="346.4" r=".6" fill="#3a60ff" opacity=".6"/>
<circle cx="236.7" cy="379.5" r=".6" fill="#3a60ff" opacity=".6"/>
<circle cx="297.4" cy="296.8" r=".6" fill="#3a60ff" opacity=".6"/>
<circle cx="189.4" cy="285.7" r=".6" fill="#3a60ff" opacity=".6"/>
<circle cx="187.0" cy="378.5" r=".6" fill="#3a60ff" opacity=".6"/>
<circle cx="262.8" cy="272.9" r=".6" fill="#3a60ff" opacity=".6"/>
<circle cx="300.1" cy="392.7" r=".6" fill="#3a60ff" opacity=".6"/>
<circle cx="278.3" cy="255.0" r=".6" fill="#3a60ff" opacity=".6"/>
<circle cx="248.0" cy="378.2" r=".6" fill="#3a60ff" opacity=".6"/>
<circle cx="220.2" cy="260.9" r=".6" fill="#3a60ff" opacity=".6"/>
<circle cx="253.7" cy="307.2" r=".6" fill="#3a60ff" opacity=".6"/>
<circle cx="230.9" cy="391.2" r=".6" fill="#3a60ff" opacity=".6"/>
<circle cx="244.2" cy="351.6" r=".6" fill="#3a60ff" opacity=".6"/>
<circle cx="165.1" cy="279.4" r=".6" fill="#3a60ff" opacity=".6"/>
<circle cx="197.1" cy="253.5" r=".6" fill="#3a60ff" opacity=".6"/>
<circle cx="210.7" cy="299.8" r=".6" fill="#3a60ff" opacity=".6"/>
<circle cx="299.4" cy="299.0" r=".6" fill="#3a60ff" opacity=".6"/>
<circle cx="163.5" cy="378.6" r=".6" fill="#3a60ff" opacity=".6"/>
<circle cx="189.8" cy="279.0" r=".6" fill="#3a60ff" opacity=".6"/>
<circle cx="206.6" cy="264.9" r=".6" fill="#3a60ff" opacity=".6"/>
<circle cx="198.5" cy="346.4" r=".6" fill="#3a60ff" opacity=".6"/>
<circle cx="194.1" cy="363.5" r=".6" fill="#3a60ff" opacity=".6"/>
<circle cx="171.6" cy="369.3" r=".6" fill="#3a60ff" opacity=".6"/>
<circle cx="179.2" cy="336.5" r=".6" fill="#3a60ff" opacity=".6"/>
<circle cx="214.9" cy="295.6" r=".6" fill="#3a60ff" opacity=".6"/>
<circle cx="248.6" cy="265.0" r=".6" fill="#3a60ff" opacity=".6"/>
<circle cx="295.5" cy="374.4" r=".6" fill="#3a60ff" opacity=".6"/>
<circle cx="180.8" cy="380.0" r=".6" fill="#3a60ff" opacity=".6"/>
<circle cx="270.7" cy="337.9" r=".6" fill="#3a60ff" opacity=".6"/>
<circle cx="267.9" cy="355.6" r=".6" fill="#3a60ff" opacity=".6"/>
<circle cx="229.3" cy="293.4" r=".6" fill="#3a60ff" opacity=".6"/>
<circle cx="247.1" cy="273.6" r=".6" fill="#3a60ff" opacity=".6"/>
<circle cx="276.6" cy="354.7" r=".6" fill="#3a60ff" opacity=".6"/>
<circle cx="232.0" cy="314.1" r=".6" fill="#3a60ff" opacity=".6"/>
<circle cx="258.9" cy="324.9" r=".6" fill="#3a60ff" opacity=".6"/>
<circle cx="288.7" cy="360.1" r=".6" fill="#3a60ff" opacity=".6"/>
<circle cx="239.9" cy="368.7" r=".6" fill="#3a60ff" opacity=".6"/>
<circle cx="160.9" cy="350.7" r=".6" fill="#3a60ff" opacity=".6"/>
<circle cx="272.7" cy="354.2" r=".6" fill="#3a60ff" opacity=".6"/>
<circle cx="295.3" cy="344.5" r=".6" fill="#3a60ff" opacity=".6"/>
<circle cx="170.8" cy="259.0" r=".6" fill="#3a60ff" opacity=".6"/>
<circle cx="249.7" cy="389.5" r=".6" fill="#3a60ff" opacity=".6"/>
<circle cx="212.5" cy="317.2" r=".6" fill="#3a60ff" opacity=".6"/>
<circle cx="165.9" cy="255.7" r=".6" fill="#3a60ff" opacity=".6"/>
<circle cx="234.6" cy="287.8" r=".6" fill="#3a60ff" opacity=".6"/>
<circle cx="196.3" cy="318.0" r=".6" fill="#3a60ff" opacity=".6"/>
<circle cx="168.6" cy="385.7" r=".6" fill="#3a60ff" opacity=".6"/>
<circle cx="172.5" cy="319.1" r="1.9" fill="url(#sp)"/>
<circle cx="183.8" cy="323.6" r="1.5" fill="url(#sp)"/>
<circle cx="181.5" cy="329.3" r="1.9" fill="url(#sp)"/>
<circle cx="184.9" cy="329.3" r="1.9" fill="url(#sp)"/>
<circle cx="192.8" cy="331.5" r="1.5" fill="url(#sp)"/>
<circle cx="187.1" cy="334.9" r="1.9" fill="url(#sp)"/>
<circle cx="178.1" cy="342.8" r="1.9" fill="url(#sp)"/>
<circle cx="181.5" cy="346.1" r="2.3" fill="url(#spb)"/>
<circle cx="177" cy="349.5" r="1.7" fill="url(#sp)"/>
<circle cx="195" cy="342.8" r="1.7" fill="url(#sp)"/>
<circle cx="190.5" cy="345" r="1.5" fill="url(#sp)"/>
<circle cx="171.4" cy="359.6" r="1.7" fill="url(#sp)"/>
<circle cx="188.3" cy="360.8" r="1.5" fill="url(#sp)"/>
<circle cx="183.8" cy="368.6" r="1.9" fill="url(#sp)"/>
<circle cx="163.5" cy="329.3" r="1.5" fill="url(#sp)"/>
<circle cx="192.8" cy="356.3" r="1.5" fill="url(#sp)"/>
<circle cx="165.8" cy="391.1" r="1.9" fill="url(#sp)"/>
<circle cx="265.9" cy="309" r="1.9" fill="url(#sp)"/>
<circle cx="285" cy="311.3" r="1.7" fill="url(#sp)"/>
<circle cx="258" cy="315.8" r="1.7" fill="url(#sp)"/>
<circle cx="267" cy="316.9" r="1.7" fill="url(#sp)"/>
<circle cx="271.5" cy="321.4" r="2.3" fill="url(#spb)"/>
<circle cx="277.1" cy="322.5" r="2.3" fill="url(#spb)"/>
<circle cx="274.9" cy="328.1" r="1.5" fill="url(#sp)"/>
<circle cx="278.3" cy="328.1" r="1.7" fill="url(#sp)"/>
<circle cx="279.4" cy="333.8" r="1.9" fill="url(#sp)"/>
<circle cx="264.8" cy="333.8" r="1.7" fill="url(#sp)"/>
<circle cx="260.3" cy="339.4" r="1.5" fill="url(#sp)"/>
<circle cx="269.3" cy="341.6" r="2.3" fill="url(#spb)"/>
<circle cx="273.8" cy="342.8" r="2.3" fill="url(#spb)"/>
<circle cx="280.5" cy="340.5" r="1.9" fill="url(#sp)"/>
<circle cx="258" cy="346.1" r="1.9" fill="url(#sp)"/>
<circle cx="269.3" cy="347.3" r="1.9" fill="url(#sp)"/>
<circle cx="278.3" cy="348.4" r="1.5" fill="url(#sp)"/>
<circle cx="288.4" cy="347.3" r="1.5" fill="url(#sp)"/>
<circle cx="255.8" cy="350.6" r="1.9" fill="url(#sp)"/>
<circle cx="263.6" cy="358.5" r="2.3" fill="url(#spb)"/>
<circle cx="272.6" cy="357.4" r="1.5" fill="url(#sp)"/>
<circle cx="278.3" cy="360.8" r="1.7" fill="url(#sp)"/>
<circle cx="286.1" cy="357.4" r="1.7" fill="url(#sp)"/>
<circle cx="274.9" cy="366.4" r="2.3" fill="url(#spb)"/>
<circle cx="267" cy="372" r="1.9" fill="url(#sp)"/>
<circle cx="254.6" cy="372" r="1.9" fill="url(#sp)"/>
<circle cx="280.5" cy="374.3" r="1.9" fill="url(#sp)"/>
<circle cx="295.1" cy="327" r="1.7" fill="url(#sp)"/>
<circle cx="298.5" cy="310.1" r="1.9" fill="url(#sp)"/>
<circle cx="217.5" cy="356.3" r="1.9" fill="url(#sp)"/>
<circle cx="224.3" cy="361.9" r="1.5" fill="url(#sp)"/>
<circle cx="229.9" cy="360.8" r="1.5" fill="url(#sp)"/>
<circle cx="238.9" cy="343.9" r="1.7" fill="url(#sp)"/>
<circle cx="238.9" cy="348.4" r="1.5" fill="url(#sp)"/>
<circle cx="235.5" cy="316.9" r="1.7" fill="url(#sp)"/>
<circle cx="235.5" cy="330.4" r="1.7" fill="url(#sp)"/>
<circle cx="242.3" cy="337.1" r="1.9" fill="url(#sp)"/>
<circle cx="240" cy="367.5" r="1.5" fill="url(#sp)"/>
<circle cx="238.9" cy="375.4" r="1.9" fill="url(#sp)"/>
<circle cx="228.8" cy="377.6" r="1.5" fill="url(#sp)"/>
<circle cx="216.4" cy="376.5" r="1.9" fill="url(#sp)"/>
<circle cx="253.5" cy="390" r="1.7" fill="url(#sp)"/>
<circle cx="258" cy="392.3" r="1.7" fill="url(#sp)"/>
<circle cx="235.5" cy="392.3" r="1.9" fill="url(#sp)"/>
<circle cx="226" cy="264" r="1.9" fill="url(#sp)"/>
<circle cx="244" cy="264" r="1.7" fill="url(#sp)"/>
<circle cx="254" cy="283" r="1.7" fill="url(#sp)"/>
<circle cx="230" cy="283" r="1.7" fill="url(#sp)"/>
<circle cx="276" cy="286" r="1.7" fill="url(#sp)"/>
<circle cx="298" cy="287" r="1.5" fill="url(#sp)"/>
<circle cx="262" cy="259" r="1.9" fill="url(#sp)"/>
<circle cx="288" cy="271" r="1.5" fill="url(#sp)"/>
<circle cx="248" cy="269" r="1.7" fill="url(#sp)"/>
<circle cx="270" cy="293" r="1.5" fill="url(#sp)"/>
<circle cx="278" cy="298" r="1.7" fill="url(#sp)"/>
<circle cx="258" cy="296" r="1.5" fill="url(#sp)"/>
<circle cx="212" cy="273" r="1.7" fill="url(#sp)"/>
<rect x="157.6" y="252.0" width="145.00000000000003" height="144.3" fill="none" stroke="#e8e8e8" stroke-width="1"/>
<path d="M157.6 254.7 h1.5 M302.6 254.7 h-1.5" stroke="#e8e8e8" stroke-width=".8"/>
<path d="M157.6 283.3 h1.5 M302.6 283.3 h-1.5" stroke="#e8e8e8" stroke-width=".8"/>
<path d="M157.6 311.6 h1.5 M302.6 311.6 h-1.5" stroke="#e8e8e8" stroke-width=".8"/>
<path d="M157.6 340.1 h1.5 M302.6 340.1 h-1.5" stroke="#e8e8e8" stroke-width=".8"/>
<path d="M157.6 368.6 h1.5 M302.6 368.6 h-1.5" stroke="#e8e8e8" stroke-width=".8"/>
<path d="M186.1 396.3 v-1.5 M186.1 252.0 v1.5" stroke="#e8e8e8" stroke-width=".8"/>
<path d="M213.9 396.3 v-1.5 M213.9 252.0 v1.5" stroke="#e8e8e8" stroke-width=".8"/>
<path d="M241.5 396.3 v-1.5 M241.5 252.0 v1.5" stroke="#e8e8e8" stroke-width=".8"/>
<path d="M270.3 396.3 v-1.5 M270.3 252.0 v1.5" stroke="#e8e8e8" stroke-width=".8"/>
<path d="M299.1 396.3 v-1.5 M299.1 252.0 v1.5" stroke="#e8e8e8" stroke-width=".8"/>
<path d="M158.3 305.2 H208.9 V384.1 H158.3" fill="none" stroke="#8cf08c" stroke-width="2"/>
<path d="M158.3 305.2 H208.9 V384.1 H158.3" fill="none" stroke="#d8ffd8" stroke-width=".6"/>
<path d="M158.5 305.2 V384.1" stroke="#f4fff4" stroke-width="2"/>
<rect x="155.1" y="302.0" width="6.4" height="6.4" fill="none" stroke="#1ed21e" stroke-width=".9"/>
<rect x="180.4" y="302.0" width="6.4" height="6.4" fill="none" stroke="#1ed21e" stroke-width=".9"/>
<rect x="205.7" y="302.0" width="6.4" height="6.4" fill="none" stroke="#1ed21e" stroke-width=".9"/>
<rect x="155.1" y="341.4" width="6.4" height="6.4" fill="none" stroke="#1ed21e" stroke-width=".9"/>
<rect x="205.7" y="341.4" width="6.4" height="6.4" fill="none" stroke="#1ed21e" stroke-width=".9"/>
<rect x="155.1" y="380.9" width="6.4" height="6.4" fill="none" stroke="#1ed21e" stroke-width=".9"/>
<rect x="180.4" y="380.9" width="6.4" height="6.4" fill="none" stroke="#1ed21e" stroke-width=".9"/>
<rect x="205.7" y="380.9" width="6.4" height="6.4" fill="none" stroke="#1ed21e" stroke-width=".9"/>
<rect x="250.2" y="303.5" width="50.60000000000002" height="78.80000000000001" fill="none" stroke="#ff8a8a" stroke-width="2.1"/>
<rect x="250.2" y="303.5" width="50.60000000000002" height="78.80000000000001" fill="none" stroke="#ffe8e8" stroke-width=".7"/>
<rect x="246.9" y="300.2" width="6.6" height="6.6" fill="none" stroke="#e01818" stroke-width=".9"/>
<rect x="272.2" y="300.2" width="6.6" height="6.6" fill="none" stroke="#e01818" stroke-width=".9"/>
<rect x="297.5" y="300.2" width="6.6" height="6.6" fill="none" stroke="#e01818" stroke-width=".9"/>
<rect x="246.9" y="339.6" width="6.6" height="6.6" fill="none" stroke="#e01818" stroke-width=".9"/>
<rect x="297.5" y="339.6" width="6.6" height="6.6" fill="none" stroke="#e01818" stroke-width=".9"/>
<rect x="246.9" y="379.0" width="6.6" height="6.6" fill="none" stroke="#e01818" stroke-width=".9"/>
<rect x="272.2" y="379.0" width="6.6" height="6.6" fill="none" stroke="#e01818" stroke-width=".9"/>
<rect x="297.5" y="379.0" width="6.6" height="6.6" fill="none" stroke="#e01818" stroke-width=".9"/>
</svg>
<div class="wt" style="left:137px;top:250.4px;width:18px;text-align:right;font-size:9.7px;letter-spacing:-.15px;color:#f4f4f4">500</div>
<div class="wt" style="left:137px;top:279.0px;width:18px;text-align:right;font-size:9.7px;letter-spacing:-.15px;color:#f4f4f4">400</div>
<div class="wt" style="left:137px;top:307.3px;width:18px;text-align:right;font-size:9.7px;letter-spacing:-.15px;color:#f4f4f4">300</div>
<div class="wt" style="left:137px;top:335.8px;width:18px;text-align:right;font-size:9.7px;letter-spacing:-.15px;color:#f4f4f4">200</div>
<div class="wt" style="left:137px;top:364.3px;width:18px;text-align:right;font-size:9.7px;letter-spacing:-.15px;color:#f4f4f4">100</div>
<div class="wt" style="left:177.1px;top:400.4px;width:18px;text-align:center;font-size:9.7px;letter-spacing:-.15px;color:#f4f4f4">100</div>
<div class="wt" style="left:204.9px;top:400.4px;width:18px;text-align:center;font-size:9.7px;letter-spacing:-.15px;color:#f4f4f4">200</div>
<div class="wt" style="left:232.5px;top:400.4px;width:18px;text-align:center;font-size:9.7px;letter-spacing:-.15px;color:#f4f4f4">300</div>
<div class="wt" style="left:261.3px;top:400.4px;width:18px;text-align:center;font-size:9.7px;letter-spacing:-.15px;color:#f4f4f4">400</div>
<div class="wt" style="left:290.1px;top:400.4px;width:18px;text-align:center;font-size:9.7px;letter-spacing:-.15px;color:#f4f4f4">500</div>
<!--/RAWIMG-->

<!-- Message board -->
<div class="a" style="left:30.6px;top:418px;width:1px;height:48px;background:#fff"></div>
<div class="hg" style="left:31.6px;top:418.7px;width:376px;height:10px"></div>
<div class="ht" style="left:34px;top:419.8px">Message board</div>
<svg class="a" style="left:385px;top:415px" width="25" height="16" viewBox="385 64 25 16"><path d="M402.2 74.8 Q399.2 74 400.2 71.6 L401.6 70.4" fill="none" stroke="#000" stroke-width="1.3"/><path d="M400.3 69.7 L404.1 68.7 L403.2 72.6 Z" fill="#000"/></svg>
<div class="lst" style="left:32px;top:428.7px;width:375px;height:36.5px;border-top:1px solid #a0a0a0"></div>
<div class="li" style="left:34.5px;top:431.2px">Tip:</div>
<div class="li" style="left:33.8px;top:451.7px;font-size:8.25px">Optimize the peakfinder thresholds to your data, then save the new settings as the default in</div>
<div class="sb" style="left:393.8px;top:429.7px;width:12.3px;height:34.5px"></div>
<div class="arr up" style="left:397px;top:434.5px"></div>
<div class="a" style="left:394.5px;top:443.5px;width:10.5px;height:5.5px;border:1px solid #9a9a9a;border-radius:1px;background:linear-gradient(#f8f8f8,#dcdcdc)"></div>
<div class="arr dn" style="left:397px;top:456.5px"></div>

<!-- ROI image overlay -->
<div class="a" style="left:411.5px;top:67px;width:1px;height:399px;background:#a6a6a6"></div>
<div class="hg" style="left:412.5px;top:68px;width:376.5px;height:10.5px"></div>
<div class="ht" style="left:415.3px;top:69.5px;font-size:8px">ROI image overlay</div>
<div class="a" style="left:781px;top:70.5px;width:2.2px;height:5px;border-radius:1px;background:#e01818"></div>
<div class="a" style="left:784.5px;top:70.5px;width:2.2px;height:5px;border-radius:1px;background:#22c022"></div>
<div class="blk" style="left:413.8px;top:78.6px;width:374.2px;height:386.2px;border:1px solid #6a6a6a"></div>
<div class="a" style="left:412.5px;top:465px;width:376.5px;height:1px;background:#a8a8a8"></div>
<div class="wt" style="left:418.8px;top:85.5px">Avg. 1-100 / 2000</div>
<div class="a" style="left:418.8px;top:100.5px;width:147px;height:12px;background:#fff"></div>
<div class="a" style="left:424px;top:100.7px;width:1.2px;height:11.6px;background:#222"></div>
<div class="a" style="left:419.8px;top:101.2px;width:3.5px;height:10.5px;background:#e8e8e8"></div>
<div class="wt" style="left:641px;top:85.5px">16 / 82</div>
<div class="wt" style="left:637px;top:102.2px">14 / 148</div>
<div class="a" style="left:671.8px;top:84.2px;width:110.2px;height:11.6px;background:#fff"></div>
<div class="a" style="left:671.8px;top:100.8px;width:110.2px;height:11.7px;background:#fff"></div>
<svg class="a" style="left:671.8px;top:84.2px" width="111" height="12" viewBox="0 0 111 12">
<path d="M27 11.6 L28.5 11 L30.5 9.8 L32.3 5.5 L34.2 2.2 L35.5 4.8 L36.6 8.8 L38.2 10.7 L41 11.1 L68 11.1 L68 11.7 Z" fill="#18d818"/>
<rect x="32.8" y="0" width="1.2" height="12" fill="#7a7a7a"/><rect x="52.3" y="0" width="1.2" height="12" fill="#7a7a7a"/>
</svg>
<svg class="a" style="left:671.8px;top:100.8px" width="111" height="12" viewBox="0 0 111 12">
<path d="M28 11.8 L30 11 L31.6 8.8 L33.3 1.8 L34.4 6 L35.4 10.3 L37.5 11.1 L77 11.1 L77 11.8 Z" fill="#e81818"/>
<rect x="31.2" y="0" width="1.2" height="12" fill="#7a7a7a"/><rect x="59.7" y="0" width="1.2" height="12" fill="#7a7a7a"/>
</svg>
<!--ROIIMG-->
<svg class="a" style="left:0;top:0" width="800" height="489" viewBox="0 0 800 489">
<defs><radialGradient id="haze" cx="50%" cy="50%" r="50%"><stop offset="0" stop-color="#2a5a10" stop-opacity=".6"/><stop offset=".55" stop-color="#1a400a" stop-opacity=".35"/><stop offset="1" stop-color="#000" stop-opacity="0"/></radialGradient><radialGradient id="yg"><stop offset="0" stop-color="#ffff60"/><stop offset=".5" stop-color="#e0c020" stop-opacity=".8"/><stop offset="1" stop-color="#806000" stop-opacity="0"/></radialGradient><radialGradient id="og2"><stop offset="0" stop-color="#ff8020"/><stop offset=".6" stop-color="#c05010" stop-opacity=".6"/><stop offset="1" stop-color="#602000" stop-opacity="0"/></radialGradient><radialGradient id="rg2"><stop offset="0" stop-color="#ff3030"/><stop offset=".6" stop-color="#c01010" stop-opacity=".7"/><stop offset="1" stop-color="#600000" stop-opacity="0"/></radialGradient><radialGradient id="gg2"><stop offset="0" stop-color="#40ff40"/><stop offset=".6" stop-color="#10a010" stop-opacity=".7"/><stop offset="1" stop-color="#005000" stop-opacity="0"/></radialGradient></defs>
<ellipse cx="598" cy="270" rx="75" ry="150" fill="url(#haze)" opacity=".32"/>
<ellipse cx="600" cy="210" rx="45" ry="60" fill="url(#haze)" opacity=".25"/>
<ellipse cx="590" cy="330" rx="45" ry="70" fill="url(#haze)" opacity=".3"/>
<circle cx="526.4" cy="430.8" r="0.8" fill="#205a10" opacity=".45"/>
<circle cx="616.9" cy="243.4" r="0.6" fill="#2a7010" opacity=".45"/>
<circle cx="578.7" cy="287.6" r="0.6" fill="#123a0a" opacity=".45"/>
<circle cx="587.2" cy="313.2" r="0.6" fill="#123a0a" opacity=".45"/>
<circle cx="589.6" cy="408.1" r="0.8" fill="#205a10" opacity=".45"/>
<circle cx="570.2" cy="126.6" r="0.8" fill="#1a5a10" opacity=".45"/>
<circle cx="581.0" cy="353.1" r="0.8" fill="#205a10" opacity=".45"/>
<circle cx="560.9" cy="239.9" r="0.8" fill="#1a5a10" opacity=".45"/>
<circle cx="664.7" cy="389.2" r="0.6" fill="#1a5a10" opacity=".45"/>
<circle cx="598.7" cy="348.6" r="0.8" fill="#123a0a" opacity=".45"/>
<circle cx="570.2" cy="440.7" r="0.8" fill="#1a5a10" opacity=".45"/>
<circle cx="626.7" cy="417.0" r="0.6" fill="#123a0a" opacity=".45"/>
<circle cx="595.5" cy="332.1" r="0.6" fill="#2a7010" opacity=".45"/>
<circle cx="610.8" cy="431.8" r="1.0" fill="#205a10" opacity=".45"/>
<circle cx="570.4" cy="371.8" r="0.6" fill="#205a10" opacity=".45"/>
<circle cx="661.1" cy="380.5" r="1.0" fill="#205a10" opacity=".45"/>
<circle cx="537.2" cy="134.6" r="0.8" fill="#205a10" opacity=".45"/>
<circle cx="578.6" cy="316.9" r="1.0" fill="#2a7010" opacity=".45"/>
<circle cx="629.5" cy="412.7" r="0.6" fill="#2a7010" opacity=".45"/>
<circle cx="564.3" cy="270.9" r="0.8" fill="#123a0a" opacity=".45"/>
<circle cx="578.6" cy="433.5" r="0.8" fill="#123a0a" opacity=".45"/>
<circle cx="660.6" cy="330.2" r="0.8" fill="#123a0a" opacity=".45"/>
<circle cx="560.5" cy="172.6" r="0.6" fill="#2a7010" opacity=".45"/>
<circle cx="583.9" cy="185.6" r="1.0" fill="#205a10" opacity=".45"/>
<circle cx="614.3" cy="440.0" r="0.8" fill="#205a10" opacity=".45"/>
<circle cx="683.5" cy="163.6" r="0.6" fill="#2a7010" opacity=".45"/>
<circle cx="628.8" cy="148.0" r="0.8" fill="#2a7010" opacity=".45"/>
<circle cx="617.7" cy="201.9" r="0.6" fill="#2a7010" opacity=".45"/>
<circle cx="597.9" cy="252.1" r="0.8" fill="#2a7010" opacity=".45"/>
<circle cx="556.7" cy="205.8" r="0.8" fill="#1a5a10" opacity=".45"/>
<circle cx="580.0" cy="159.2" r="0.6" fill="#2a7010" opacity=".45"/>
<circle cx="701.2" cy="206.0" r="0.8" fill="#2a7010" opacity=".45"/>
<circle cx="562.9" cy="426.2" r="0.6" fill="#1a5a10" opacity=".45"/>
<circle cx="623.6" cy="129.0" r="1.0" fill="#205a10" opacity=".45"/>
<circle cx="582.4" cy="418.6" r="0.8" fill="#205a10" opacity=".45"/>
<circle cx="599.0" cy="198.7" r="0.6" fill="#1a5a10" opacity=".45"/>
<circle cx="625.5" cy="338.6" r="0.6" fill="#205a10" opacity=".45"/>
<circle cx="638.1" cy="296.5" r="0.6" fill="#1a5a10" opacity=".45"/>
<circle cx="603.9" cy="415.3" r="0.6" fill="#123a0a" opacity=".45"/>
<circle cx="569.5" cy="320.6" r="1.0" fill="#205a10" opacity=".45"/>
<circle cx="599.6" cy="215.5" r="0.8" fill="#2a7010" opacity=".45"/>
<circle cx="579.8" cy="202.7" r="0.6" fill="#1a5a10" opacity=".45"/>
<circle cx="566.7" cy="220.6" r="0.8" fill="#2a7010" opacity=".45"/>
<circle cx="548.3" cy="128.0" r="1.0" fill="#205a10" opacity=".45"/>
<circle cx="589.7" cy="328.1" r="0.6" fill="#1a5a10" opacity=".45"/>
<circle cx="626.6" cy="327.3" r="0.8" fill="#1a5a10" opacity=".45"/>
<circle cx="676.1" cy="192.1" r="0.8" fill="#205a10" opacity=".45"/>
<circle cx="599.5" cy="227.6" r="0.8" fill="#205a10" opacity=".45"/>
<circle cx="608.4" cy="338.7" r="0.6" fill="#2a7010" opacity=".45"/>
<circle cx="617.1" cy="281.4" r="0.8" fill="#2a7010" opacity=".45"/>
<circle cx="535.3" cy="431.4" r="0.6" fill="#123a0a" opacity=".45"/>
<circle cx="601.4" cy="363.9" r="0.6" fill="#123a0a" opacity=".45"/>
<circle cx="626.1" cy="425.6" r="1.0" fill="#205a10" opacity=".45"/>
<circle cx="608.9" cy="253.1" r="1.0" fill="#1a5a10" opacity=".45"/>
<circle cx="624.3" cy="165.8" r="0.6" fill="#205a10" opacity=".45"/>
<circle cx="622.9" cy="164.4" r="1.0" fill="#1a5a10" opacity=".45"/>
<circle cx="703.2" cy="138.0" r="0.8" fill="#205a10" opacity=".45"/>
<circle cx="664.5" cy="354.9" r="0.6" fill="#1a5a10" opacity=".45"/>
<circle cx="548.5" cy="224.8" r="1.0" fill="#2a7010" opacity=".45"/>
<circle cx="658.9" cy="128.9" r="0.8" fill="#205a10" opacity=".45"/>
<circle cx="572.0" cy="436.3" r="0.6" fill="#205a10" opacity=".45"/>
<circle cx="610.5" cy="144.6" r="0.6" fill="#205a10" opacity=".45"/>
<circle cx="608.2" cy="299.6" r="0.8" fill="#2a7010" opacity=".45"/>
<circle cx="551.9" cy="383.7" r="0.6" fill="#205a10" opacity=".45"/>
<circle cx="656.2" cy="134.5" r="0.6" fill="#205a10" opacity=".45"/>
<circle cx="535.4" cy="180.9" r="1.0" fill="#123a0a" opacity=".45"/>
<circle cx="662.4" cy="407.9" r="1.0" fill="#1a5a10" opacity=".45"/>
<circle cx="536.1" cy="365.9" r="0.8" fill="#1a5a10" opacity=".45"/>
<circle cx="636.9" cy="129.8" r="0.6" fill="#1a5a10" opacity=".45"/>
<circle cx="595.1" cy="408.4" r="0.8" fill="#123a0a" opacity=".45"/>
<circle cx="664.3" cy="206.4" r="0.8" fill="#1a5a10" opacity=".45"/>
<circle cx="596.6" cy="416.7" r="0.6" fill="#123a0a" opacity=".45"/>
<circle cx="536.8" cy="351.3" r="0.6" fill="#1a5a10" opacity=".45"/>
<circle cx="606.8" cy="349.4" r="0.8" fill="#205a10" opacity=".45"/>
<circle cx="581.1" cy="373.3" r="0.8" fill="#205a10" opacity=".45"/>
<circle cx="629.5" cy="121.4" r="1.0" fill="#123a0a" opacity=".45"/>
<circle cx="632.7" cy="367.8" r="0.8" fill="#2a7010" opacity=".45"/>
<circle cx="626.6" cy="371.4" r="1.0" fill="#1a5a10" opacity=".45"/>
<circle cx="564.0" cy="182.2" r="0.6" fill="#2a7010" opacity=".45"/>
<circle cx="549.5" cy="273.9" r="0.6" fill="#123a0a" opacity=".45"/>
<circle cx="629.7" cy="434.7" r="0.6" fill="#1a5a10" opacity=".45"/>
<circle cx="596.4" cy="149.7" r="1.0" fill="#205a10" opacity=".45"/>
<circle cx="614.7" cy="432.1" r="0.6" fill="#2a7010" opacity=".45"/>
<circle cx="627.8" cy="406.0" r="1.0" fill="#2a7010" opacity=".45"/>
<circle cx="631.0" cy="292.3" r="0.8" fill="#1a5a10" opacity=".45"/>
<circle cx="583.9" cy="238.9" r="0.6" fill="#123a0a" opacity=".45"/>
<circle cx="647.8" cy="260.3" r="0.6" fill="#2a7010" opacity=".45"/>
<circle cx="601.0" cy="411.3" r="0.8" fill="#2a7010" opacity=".45"/>
<circle cx="630.4" cy="139.5" r="0.6" fill="#123a0a" opacity=".45"/>
<circle cx="569.0" cy="379.3" r="0.6" fill="#205a10" opacity=".45"/>
<circle cx="596.7" cy="151.6" r="0.6" fill="#205a10" opacity=".45"/>
<circle cx="645.8" cy="131.6" r="0.6" fill="#123a0a" opacity=".45"/>
<circle cx="523.3" cy="157.0" r="1.0" fill="#2a7010" opacity=".45"/>
<circle cx="650.2" cy="418.6" r="1.0" fill="#123a0a" opacity=".45"/>
<circle cx="589.1" cy="397.9" r="1.0" fill="#205a10" opacity=".45"/>
<circle cx="593.7" cy="423.6" r="1.0" fill="#1a5a10" opacity=".45"/>
<circle cx="667.2" cy="310.9" r="0.6" fill="#123a0a" opacity=".45"/>
<circle cx="633.5" cy="132.8" r="0.6" fill="#123a0a" opacity=".45"/>
<circle cx="606.5" cy="311.9" r="0.6" fill="#2a7010" opacity=".45"/>
<circle cx="615.2" cy="238.5" r="0.6" fill="#123a0a" opacity=".45"/>
<circle cx="560.8" cy="184.2" r="1.0" fill="#205a10" opacity=".45"/>
<circle cx="557.3" cy="375.3" r="1.0" fill="#2a7010" opacity=".45"/>
<circle cx="602.2" cy="290.8" r="0.8" fill="#2a7010" opacity=".45"/>
<circle cx="584.2" cy="210.0" r="0.8" fill="#123a0a" opacity=".45"/>
<circle cx="559.3" cy="426.0" r="1.0" fill="#123a0a" opacity=".45"/>
<circle cx="563.6" cy="252.9" r="1.0" fill="#123a0a" opacity=".45"/>
<circle cx="582.7" cy="182.2" r="0.6" fill="#205a10" opacity=".45"/>
<circle cx="637.9" cy="169.1" r="0.6" fill="#1a5a10" opacity=".45"/>
<circle cx="582.8" cy="249.6" r="0.8" fill="#123a0a" opacity=".45"/>
<circle cx="601.0" cy="135.3" r="1.0" fill="#2a7010" opacity=".45"/>
<circle cx="577.1" cy="378.7" r="0.6" fill="#205a10" opacity=".45"/>
<circle cx="515.9" cy="356.4" r="0.6" fill="#2a7010" opacity=".45"/>
<circle cx="557.5" cy="230.8" r="1.0" fill="#2a7010" opacity=".45"/>
<circle cx="605.0" cy="242.4" r="0.8" fill="#2a7010" opacity=".45"/>
<circle cx="611.1" cy="159.4" r="0.8" fill="#1a5a10" opacity=".45"/>
<circle cx="576.4" cy="323.8" r="1.0" fill="#1a5a10" opacity=".45"/>
<circle cx="648.3" cy="318.7" r="1.0" fill="#2a7010" opacity=".45"/>
<circle cx="604.3" cy="249.0" r="0.8" fill="#2a7010" opacity=".45"/>
<circle cx="570.4" cy="177.6" r="0.6" fill="#2a7010" opacity=".45"/>
<circle cx="559.0" cy="242.3" r="0.6" fill="#1a5a10" opacity=".45"/>
<circle cx="626.5" cy="198.3" r="0.6" fill="#2a7010" opacity=".45"/>
<circle cx="655.3" cy="335.4" r="0.6" fill="#123a0a" opacity=".45"/>
<circle cx="546.7" cy="244.3" r="1.0" fill="#205a10" opacity=".45"/>
<circle cx="638.4" cy="327.9" r="1.0" fill="#123a0a" opacity=".45"/>
<circle cx="541.6" cy="199.0" r="1.0" fill="#205a10" opacity=".45"/>
<circle cx="566.2" cy="176.3" r="1.0" fill="#1a5a10" opacity=".45"/>
<circle cx="633.0" cy="436.6" r="0.6" fill="#205a10" opacity=".45"/>
<circle cx="545.5" cy="382.7" r="0.8" fill="#2a7010" opacity=".45"/>
<circle cx="616.2" cy="247.7" r="0.6" fill="#1a5a10" opacity=".45"/>
<circle cx="574.0" cy="377.3" r="0.6" fill="#1a5a10" opacity=".45"/>
<circle cx="627.6" cy="323.9" r="1.0" fill="#1a5a10" opacity=".45"/>
<circle cx="573.1" cy="144.4" r="1.0" fill="#205a10" opacity=".45"/>
<circle cx="656.8" cy="425.3" r="0.6" fill="#2a7010" opacity=".45"/>
<circle cx="681.1" cy="354.7" r="0.6" fill="#1a5a10" opacity=".45"/>
<circle cx="622.8" cy="380.1" r="1.0" fill="#2a7010" opacity=".45"/>
<circle cx="576.3" cy="372.9" r="0.6" fill="#2a7010" opacity=".45"/>
<circle cx="625.4" cy="199.9" r="1.0" fill="#123a0a" opacity=".45"/>
<circle cx="550.4" cy="207.3" r="0.6" fill="#205a10" opacity=".45"/>
<circle cx="595.3" cy="273.4" r="1.0" fill="#123a0a" opacity=".45"/>
<circle cx="701.2" cy="281.8" r="0.8" fill="#123a0a" opacity=".45"/>
<circle cx="622.7" cy="170.6" r="1.0" fill="#123a0a" opacity=".45"/>
<circle cx="603.8" cy="224.3" r="0.6" fill="#205a10" opacity=".45"/>
<circle cx="606.2" cy="366.4" r="1.0" fill="#1a5a10" opacity=".45"/>
<circle cx="567.7" cy="395.4" r="1.0" fill="#205a10" opacity=".45"/>
<circle cx="537.4" cy="407.6" r="1.0" fill="#123a0a" opacity=".45"/>
<circle cx="589.8" cy="321.7" r="1.0" fill="#205a10" opacity=".45"/>
<circle cx="607.3" cy="438.0" r="0.8" fill="#2a7010" opacity=".45"/>
<circle cx="568.0" cy="225.3" r="0.8" fill="#1a5a10" opacity=".45"/>
<circle cx="604.9" cy="427.5" r="1.0" fill="#123a0a" opacity=".45"/>
<circle cx="652.9" cy="200.4" r="1.0" fill="#123a0a" opacity=".45"/>
<circle cx="608.5" cy="166.8" r="0.8" fill="#205a10" opacity=".45"/>
<circle cx="598.1" cy="283.9" r="0.6" fill="#1a5a10" opacity=".45"/>
<circle cx="543.1" cy="133.3" r="0.6" fill="#1a5a10" opacity=".45"/>
<circle cx="602.0" cy="301.5" r="0.6" fill="#123a0a" opacity=".45"/>
<circle cx="549.1" cy="251.9" r="1.0" fill="#123a0a" opacity=".45"/>
<circle cx="590.9" cy="161.7" r="1.0" fill="#123a0a" opacity=".45"/>
<circle cx="609.1" cy="123.2" r="1.0" fill="#2a7010" opacity=".45"/>
<circle cx="577.3" cy="166.8" r="0.6" fill="#1a5a10" opacity=".45"/>
<circle cx="545.7" cy="370.8" r="0.8" fill="#205a10" opacity=".45"/>
<circle cx="536.2" cy="430.5" r="1.0" fill="#1a5a10" opacity=".45"/>
<circle cx="634.4" cy="310.4" r="1.0" fill="#205a10" opacity=".45"/>
<circle cx="521.7" cy="420.8" r="0.6" fill="#205a10" opacity=".45"/>
<circle cx="598.6" cy="138.4" r="0.8" fill="#1a5a10" opacity=".45"/>
<circle cx="599.0" cy="178.5" r="0.6" fill="#2a7010" opacity=".45"/>
<circle cx="614.0" cy="316.2" r="0.6" fill="#2a7010" opacity=".45"/>
<circle cx="588.1" cy="251.8" r="1.0" fill="#205a10" opacity=".45"/>
<circle cx="613.7" cy="215.4" r="1.0" fill="#1a5a10" opacity=".45"/>
<circle cx="628.6" cy="371.1" r="0.8" fill="#1a5a10" opacity=".45"/>
<circle cx="635.0" cy="268.6" r="0.6" fill="#205a10" opacity=".45"/>
<circle cx="543.2" cy="191.5" r="0.8" fill="#1a5a10" opacity=".45"/>
<circle cx="599.2" cy="226.8" r="1.0" fill="#123a0a" opacity=".45"/>
<circle cx="609.2" cy="135.5" r="1.0" fill="#205a10" opacity=".45"/>
<circle cx="609.6" cy="204.2" r="0.6" fill="#2a7010" opacity=".45"/>
<circle cx="550.7" cy="402.4" r="0.6" fill="#1a5a10" opacity=".45"/>
<circle cx="596.1" cy="358.5" r="1.0" fill="#2a7010" opacity=".45"/>
<circle cx="627.3" cy="413.7" r="0.8" fill="#2a7010" opacity=".45"/>
<circle cx="584.0" cy="411.3" r="0.8" fill="#205a10" opacity=".45"/>
<circle cx="624.0" cy="389.4" r="0.6" fill="#1a5a10" opacity=".45"/>
<circle cx="538.7" cy="302.5" r="0.6" fill="#123a0a" opacity=".45"/>
<circle cx="622.7" cy="244.9" r="1.0" fill="#1a5a10" opacity=".45"/>
<circle cx="616.9" cy="127.3" r="1.0" fill="#1a5a10" opacity=".45"/>
<circle cx="586.1" cy="418.2" r="0.6" fill="#123a0a" opacity=".45"/>
<circle cx="594.9" cy="163.2" r="1.0" fill="#1a5a10" opacity=".45"/>
<circle cx="588.5" cy="140.5" r="0.6" fill="#1a5a10" opacity=".45"/>
<circle cx="640.0" cy="182.9" r="1.0" fill="#1a5a10" opacity=".45"/>
<circle cx="544.9" cy="423.1" r="0.6" fill="#1a5a10" opacity=".45"/>
<circle cx="603.4" cy="129.7" r="1.0" fill="#1a5a10" opacity=".45"/>
<circle cx="616.7" cy="322.5" r="0.6" fill="#205a10" opacity=".45"/>
<circle cx="645.7" cy="327.0" r="0.8" fill="#123a0a" opacity=".45"/>
<circle cx="650.5" cy="227.1" r="0.6" fill="#123a0a" opacity=".45"/>
<circle cx="543.3" cy="134.2" r="0.8" fill="#123a0a" opacity=".45"/>
<circle cx="672.3" cy="366.7" r="0.8" fill="#205a10" opacity=".45"/>
<circle cx="590.6" cy="251.8" r="1.0" fill="#205a10" opacity=".45"/>
<circle cx="591.2" cy="367.9" r="0.8" fill="#123a0a" opacity=".45"/>
<circle cx="584.0" cy="188.4" r="1.0" fill="#1a5a10" opacity=".45"/>
<circle cx="550.3" cy="383.0" r="0.8" fill="#2a7010" opacity=".45"/>
<circle cx="624.9" cy="364.4" r="0.6" fill="#1a5a10" opacity=".45"/>
<circle cx="598.2" cy="230.8" r="0.8" fill="#1a5a10" opacity=".45"/>
<circle cx="572.8" cy="430.5" r="1.0" fill="#123a0a" opacity=".45"/>
<circle cx="527.7" cy="202.6" r="0.8" fill="#2a7010" opacity=".45"/>
<circle cx="635.6" cy="193.3" r="0.6" fill="#2a7010" opacity=".45"/>
<circle cx="511.4" cy="421.3" r="0.8" fill="#1a5a10" opacity=".45"/>
<circle cx="612.6" cy="372.4" r="0.8" fill="#123a0a" opacity=".45"/>
<circle cx="537.9" cy="149.3" r="1.0" fill="#205a10" opacity=".45"/>
<circle cx="669.8" cy="126.7" r="0.8" fill="#2a7010" opacity=".45"/>
<circle cx="641.2" cy="203.5" r="0.8" fill="#2a7010" opacity=".45"/>
<circle cx="654.1" cy="423.0" r="1.0" fill="#2a7010" opacity=".45"/>
<circle cx="591.8" cy="310.2" r="0.8" fill="#1a5a10" opacity=".45"/>
<circle cx="555.7" cy="398.5" r="1.0" fill="#205a10" opacity=".45"/>
<circle cx="574.2" cy="297.2" r="0.6" fill="#123a0a" opacity=".45"/>
<circle cx="538.5" cy="201.6" r="0.6" fill="#2a7010" opacity=".45"/>
<circle cx="612.0" cy="226.3" r="1.0" fill="#2a7010" opacity=".45"/>
<circle cx="610.2" cy="345.4" r="1.0" fill="#2a7010" opacity=".45"/>
<circle cx="629.6" cy="168.9" r="1.0" fill="#2a7010" opacity=".45"/>
<circle cx="575.5" cy="170.5" r="0.6" fill="#123a0a" opacity=".45"/>
<circle cx="641.1" cy="202.0" r="0.6" fill="#1a5a10" opacity=".45"/>
<circle cx="616.0" cy="242.5" r="0.8" fill="#2a7010" opacity=".45"/>
<circle cx="593.7" cy="355.1" r="0.8" fill="#205a10" opacity=".45"/>
<circle cx="616.9" cy="153.1" r="0.8" fill="#2a7010" opacity=".45"/>
<circle cx="651.8" cy="268.2" r="0.8" fill="#1a5a10" opacity=".45"/>
<circle cx="624.1" cy="190.3" r="0.8" fill="#123a0a" opacity=".45"/>
<circle cx="564.0" cy="125.7" r="1.0" fill="#123a0a" opacity=".45"/>
<circle cx="597.7" cy="196.7" r="1.0" fill="#205a10" opacity=".45"/>
<circle cx="593.8" cy="303.7" r="0.6" fill="#205a10" opacity=".45"/>
<circle cx="569.3" cy="401.6" r="1.0" fill="#2a7010" opacity=".45"/>
<circle cx="547.4" cy="177.1" r="0.8" fill="#1a5a10" opacity=".45"/>
<circle cx="569.7" cy="344.6" r="0.6" fill="#205a10" opacity=".45"/>
<circle cx="610.8" cy="370.9" r="0.8" fill="#2a7010" opacity=".45"/>
<circle cx="624.9" cy="124.9" r="1.0" fill="#205a10" opacity=".45"/>
<circle cx="560.7" cy="336.4" r="1.0" fill="#2a7010" opacity=".45"/>
<circle cx="595.2" cy="386.9" r="0.6" fill="#1a5a10" opacity=".45"/>
<circle cx="603.2" cy="199.6" r="0.6" fill="#2a7010" opacity=".45"/>
<circle cx="577.3" cy="183.0" r="0.6" fill="#123a0a" opacity=".45"/>
<circle cx="571.9" cy="272.0" r="1.0" fill="#1a5a10" opacity=".45"/>
<circle cx="605.3" cy="374.2" r="1.0" fill="#123a0a" opacity=".45"/>
<circle cx="561.7" cy="266.0" r="0.8" fill="#2a7010" opacity=".45"/>
<circle cx="653.0" cy="284.3" r="1.0" fill="#1a5a10" opacity=".45"/>
<circle cx="635.3" cy="136.9" r="0.8" fill="#123a0a" opacity=".45"/>
<circle cx="594.3" cy="247.5" r="0.6" fill="#1a5a10" opacity=".45"/>
<circle cx="561.6" cy="343.8" r="1.0" fill="#123a0a" opacity=".45"/>
<circle cx="618.5" cy="204.1" r="0.8" fill="#2a7010" opacity=".45"/>
<circle cx="592.9" cy="288.6" r="0.8" fill="#2a7010" opacity=".45"/>
<circle cx="645.1" cy="140.8" r="0.8" fill="#2a7010" opacity=".45"/>
<circle cx="677.1" cy="325.7" r="0.6" fill="#2a7010" opacity=".45"/>
<circle cx="563.5" cy="382.6" r="0.8" fill="#205a10" opacity=".45"/>
<circle cx="643.5" cy="439.9" r="0.8" fill="#2a7010" opacity=".45"/>
<circle cx="550.3" cy="204.8" r="1.0" fill="#205a10" opacity=".45"/>
<circle cx="659.7" cy="200.4" r="1.0" fill="#205a10" opacity=".45"/>
<circle cx="599.2" cy="351.4" r="0.8" fill="#123a0a" opacity=".45"/>
<circle cx="600.7" cy="197.6" r="0.8" fill="#123a0a" opacity=".45"/>
<circle cx="556.0" cy="324.1" r="0.6" fill="#123a0a" opacity=".45"/>
<circle cx="603.4" cy="418.1" r="0.6" fill="#205a10" opacity=".45"/>
<circle cx="642.4" cy="223.3" r="1.0" fill="#2a7010" opacity=".45"/>
<circle cx="624.3" cy="386.7" r="1.0" fill="#1a5a10" opacity=".45"/>
<circle cx="696.2" cy="330.1" r="1.0" fill="#123a0a" opacity=".45"/>
<circle cx="605.1" cy="151.3" r="0.6" fill="#2a7010" opacity=".45"/>
<circle cx="543.0" cy="264.4" r="0.7" fill="#1a5a10" opacity=".6"/>
<circle cx="691.7" cy="373.9" r="1.2" fill="#1a5a10" opacity=".6"/>
<circle cx="689.0" cy="314.8" r="1.2" fill="#1a5a10" opacity=".6"/>
<circle cx="691.1" cy="295.5" r="0.9" fill="#4a1a10" opacity=".6"/>
<circle cx="545.4" cy="342.0" r="0.7" fill="#4a1a10" opacity=".6"/>
<circle cx="658.1" cy="260.0" r="1.2" fill="#1a5a10" opacity=".6"/>
<circle cx="529.1" cy="253.7" r="0.9" fill="#1a5a10" opacity=".6"/>
<circle cx="606.6" cy="137.5" r="0.7" fill="#2a7010" opacity=".6"/>
<circle cx="649.5" cy="198.1" r="1.2" fill="#1a5a10" opacity=".6"/>
<circle cx="628.7" cy="355.5" r="0.9" fill="#1a5a10" opacity=".6"/>
<circle cx="601.4" cy="300.0" r="0.9" fill="#4a1a10" opacity=".6"/>
<circle cx="678.5" cy="239.5" r="1.2" fill="#2a7010" opacity=".6"/>
<circle cx="520.2" cy="324.0" r="1.2" fill="#4a1a10" opacity=".6"/>
<circle cx="510.5" cy="315.2" r="1.2" fill="#4a1a10" opacity=".6"/>
<circle cx="697.3" cy="225.2" r="1.2" fill="#1a5a10" opacity=".6"/>
<circle cx="604.8" cy="362.8" r="0.7" fill="#1a5a10" opacity=".6"/>
<circle cx="548.7" cy="252.6" r="0.9" fill="#1a5a10" opacity=".6"/>
<circle cx="524.1" cy="331.1" r="0.9" fill="#2a7010" opacity=".6"/>
<circle cx="665.7" cy="297.3" r="0.9" fill="#1a5a10" opacity=".6"/>
<circle cx="594.6" cy="254.8" r="0.7" fill="#4a1a10" opacity=".6"/>
<circle cx="675.6" cy="213.1" r="0.9" fill="#2a7010" opacity=".6"/>
<circle cx="573.6" cy="436.0" r="0.9" fill="#4a1a10" opacity=".6"/>
<circle cx="706.3" cy="329.7" r="0.9" fill="#1a5a10" opacity=".6"/>
<circle cx="544.4" cy="348.6" r="1.2" fill="#1a5a10" opacity=".6"/>
<circle cx="705.9" cy="146.8" r="0.9" fill="#1a5a10" opacity=".6"/>
<circle cx="654.1" cy="404.2" r="1.2" fill="#4a1a10" opacity=".6"/>
<circle cx="514.9" cy="215.5" r="0.7" fill="#1a5a10" opacity=".6"/>
<circle cx="543.9" cy="415.8" r="1.2" fill="#4a1a10" opacity=".6"/>
<circle cx="517.0" cy="280.1" r="1.2" fill="#4a1a10" opacity=".6"/>
<circle cx="582.4" cy="166.0" r="1.2" fill="#4a1a10" opacity=".6"/>
<circle cx="647.2" cy="401.2" r="0.7" fill="#1a5a10" opacity=".6"/>
<circle cx="512.8" cy="322.9" r="0.7" fill="#4a1a10" opacity=".6"/>
<circle cx="525.6" cy="177.1" r="0.9" fill="#1a5a10" opacity=".6"/>
<circle cx="664.9" cy="413.4" r="0.7" fill="#4a1a10" opacity=".6"/>
<circle cx="580.9" cy="383.9" r="1.2" fill="#2a7010" opacity=".6"/>
<circle cx="651.5" cy="396.7" r="0.9" fill="#1a5a10" opacity=".6"/>
<circle cx="511.7" cy="125.2" r="1.2" fill="#4a1a10" opacity=".6"/>
<circle cx="624.2" cy="413.3" r="1.2" fill="#2a7010" opacity=".6"/>
<circle cx="612.6" cy="384.6" r="1.2" fill="#2a7010" opacity=".6"/>
<circle cx="648.5" cy="249.1" r="0.7" fill="#1a5a10" opacity=".6"/>
<circle cx="645.3" cy="310.1" r="0.7" fill="#4a1a10" opacity=".6"/>
<circle cx="603.0" cy="251.6" r="0.7" fill="#1a5a10" opacity=".6"/>
<circle cx="637.9" cy="187.1" r="1.2" fill="#1a5a10" opacity=".6"/>
<circle cx="507.8" cy="120.1" r="1.2" fill="#4a1a10" opacity=".6"/>
<circle cx="529.8" cy="430.2" r="0.7" fill="#1a5a10" opacity=".6"/>
<circle cx="684.5" cy="160.2" r="0.9" fill="#1a5a10" opacity=".6"/>
<circle cx="653.4" cy="196.7" r="1.2" fill="#4a1a10" opacity=".6"/>
<circle cx="543.4" cy="134.8" r="1.2" fill="#4a1a10" opacity=".6"/>
<circle cx="648.4" cy="165.3" r="0.9" fill="#1a5a10" opacity=".6"/>
<circle cx="634.7" cy="347.3" r="1.2" fill="#2a7010" opacity=".6"/>
<circle cx="583.3" cy="274.6" r="5" fill="url(#yg)" opacity=".8"/><circle cx="583.3" cy="274.6" r="3.2" fill="#f0ec20" opacity="0.6"/>
<circle cx="582.8" cy="274.6" r="3.3" fill="none" stroke="#b8f020" stroke-width="1"/>
<circle cx="583.9" cy="275.1" r="1" fill="#ff6010" opacity=".7"/>
<circle cx="580.9" cy="297.6" r="5" fill="url(#yg)" opacity=".8"/><circle cx="580.9" cy="297.6" r="3.2" fill="#f0ec20" opacity="1"/>
<circle cx="580.4" cy="297.6" r="3.3" fill="none" stroke="#b8f020" stroke-width="1"/>
<circle cx="581.5" cy="298.1" r="1" fill="#ff6010" opacity=".7"/>
<circle cx="599.7" cy="282.8" r="5" fill="url(#yg)" opacity=".8"/><circle cx="599.7" cy="282.8" r="3.2" fill="#f0ec20" opacity="0.6"/>
<circle cx="599.2" cy="282.8" r="3.3" fill="none" stroke="#b8f020" stroke-width="1"/>
<circle cx="600.3000000000001" cy="283.3" r="1" fill="#ff6010" opacity=".7"/>
<circle cx="557.4" cy="342.8" r="3" fill="url(#og2)"/>
<circle cx="555.9" cy="343.1" r="3.3" fill="none" stroke="#ff2010" stroke-width="1.1"/>
<circle cx="558.9" cy="342.3" r="3.3" fill="none" stroke="#30e030" stroke-width="1.1"/>
<circle cx="557.4" cy="342.8" r="3.3" fill="none" stroke="#f0d820" stroke-width="1"/>
<circle cx="586.4" cy="187.3" r="2" fill="url(#og2)" opacity=".8"/>
<circle cx="586.9" cy="187.3" r="3.3" fill="none" stroke="#ff3010" stroke-width="1"/>
<circle cx="585.7" cy="187.3" r="3.3" fill="none" stroke="#30e030" stroke-width="1.1"/>
<circle cx="586.4" cy="187.3" r="3.3" fill="none" stroke="#e8f028" stroke-width="1" opacity=".85"/>
<circle cx="605" cy="216" r="2" fill="url(#og2)" opacity=".8"/>
<circle cx="605.5" cy="216" r="3.3" fill="none" stroke="#ff3010" stroke-width="1"/>
<circle cx="604.3" cy="216" r="3.3" fill="none" stroke="#30e030" stroke-width="1.1"/>
<circle cx="605" cy="216" r="3.3" fill="none" stroke="#e8f028" stroke-width="1" opacity=".85"/>
<circle cx="613.3" cy="189.3" r="2" fill="url(#og2)" opacity=".8"/>
<circle cx="613.8" cy="189.3" r="3.3" fill="none" stroke="#ff3010" stroke-width="1"/>
<circle cx="612.6" cy="189.3" r="3.3" fill="none" stroke="#30e030" stroke-width="1.1"/>
<circle cx="613.3" cy="189.3" r="3.3" fill="none" stroke="#e8f028" stroke-width="1" opacity=".85"/>
<circle cx="517.1" cy="255.2" r="2" fill="url(#og2)" opacity=".8"/>
<circle cx="517.6" cy="255.2" r="3.3" fill="none" stroke="#ff3010" stroke-width="1"/>
<circle cx="516.4" cy="255.2" r="3.3" fill="none" stroke="#30e030" stroke-width="1.1"/>
<circle cx="517.1" cy="255.2" r="3.3" fill="none" stroke="#e8f028" stroke-width="1" opacity=".85"/>
<circle cx="609.8" cy="200" r="2" fill="url(#og2)" opacity=".8"/>
<circle cx="610.3" cy="200" r="3.3" fill="none" stroke="#ff3010" stroke-width="1"/>
<circle cx="609.1" cy="200" r="3.3" fill="none" stroke="#30e030" stroke-width="1.1"/>
<circle cx="609.8" cy="200" r="3.3" fill="none" stroke="#e8f028" stroke-width="1" opacity=".85"/>
<circle cx="626.6" cy="270.1" r="2" fill="url(#og2)" opacity=".8"/>
<circle cx="627.1" cy="270.1" r="3.3" fill="none" stroke="#ff3010" stroke-width="1"/>
<circle cx="625.9" cy="270.1" r="3.3" fill="none" stroke="#30e030" stroke-width="1.1"/>
<circle cx="626.6" cy="270.1" r="3.3" fill="none" stroke="#e8f028" stroke-width="1" opacity=".85"/>
<circle cx="622.5" cy="236.8" r="2" fill="url(#og2)" opacity=".8"/>
<circle cx="623.0" cy="236.8" r="3.3" fill="none" stroke="#ff3010" stroke-width="1"/>
<circle cx="621.8" cy="236.8" r="3.3" fill="none" stroke="#30e030" stroke-width="1.1"/>
<circle cx="622.5" cy="236.8" r="3.3" fill="none" stroke="#e8f028" stroke-width="1" opacity=".85"/>
<circle cx="590.1" cy="135.6" r="2" fill="url(#og2)" opacity=".8"/>
<circle cx="590.6" cy="135.6" r="3.3" fill="none" stroke="#ff3010" stroke-width="1"/>
<circle cx="589.4" cy="135.6" r="3.3" fill="none" stroke="#30e030" stroke-width="1.1"/>
<circle cx="590.1" cy="135.6" r="3.3" fill="none" stroke="#e8f028" stroke-width="1" opacity=".85"/>
<circle cx="618.4" cy="216.4" r="2" fill="url(#og2)" opacity=".8"/>
<circle cx="618.9" cy="216.4" r="3.3" fill="none" stroke="#ff3010" stroke-width="1"/>
<circle cx="617.7" cy="216.4" r="3.3" fill="none" stroke="#30e030" stroke-width="1.1"/>
<circle cx="618.4" cy="216.4" r="3.3" fill="none" stroke="#e8f028" stroke-width="1" opacity=".85"/>
<circle cx="618.8" cy="354.4" r="2" fill="url(#og2)" opacity=".8"/>
<circle cx="619.3" cy="354.4" r="3.3" fill="none" stroke="#ff3010" stroke-width="1"/>
<circle cx="618.1" cy="354.4" r="3.3" fill="none" stroke="#30e030" stroke-width="1.1"/>
<circle cx="618.8" cy="354.4" r="3.3" fill="none" stroke="#e8f028" stroke-width="1" opacity=".85"/>
<circle cx="519.1" cy="181.2" r="2" fill="url(#og2)" opacity=".8"/>
<circle cx="519.6" cy="181.2" r="3.3" fill="none" stroke="#ff3010" stroke-width="1"/>
<circle cx="518.4" cy="181.2" r="3.3" fill="none" stroke="#30e030" stroke-width="1.1"/>
<circle cx="519.1" cy="181.2" r="3.3" fill="none" stroke="#e8f028" stroke-width="1" opacity=".85"/>
<circle cx="604" cy="376.6" r="2" fill="url(#og2)" opacity=".8"/>
<circle cx="604.5" cy="376.6" r="3.3" fill="none" stroke="#ff3010" stroke-width="1"/>
<circle cx="603.3" cy="376.6" r="3.3" fill="none" stroke="#30e030" stroke-width="1.1"/>
<circle cx="604" cy="376.6" r="3.3" fill="none" stroke="#e8f028" stroke-width="1" opacity=".85"/>
<circle cx="569.1" cy="400.6" r="3" fill="url(#og2)"/>
<circle cx="567.5" cy="400.90000000000003" r="3.3" fill="none" stroke="#ff2010" stroke-width="1.1"/>
<circle cx="570.7" cy="400.1" r="3.3" fill="none" stroke="#30e030" stroke-width="1.1"/>
<circle cx="569.1" cy="400.6" r="3.3" fill="none" stroke="#f0d820" stroke-width="1"/>
<circle cx="611.1" cy="379.4" r="2" fill="url(#og2)" opacity=".8"/>
<circle cx="611.6" cy="379.4" r="3.3" fill="none" stroke="#ff3010" stroke-width="1"/>
<circle cx="610.4" cy="379.4" r="3.3" fill="none" stroke="#30e030" stroke-width="1.1"/>
<circle cx="611.1" cy="379.4" r="3.3" fill="none" stroke="#e8f028" stroke-width="1" opacity=".85"/>
<circle cx="630.7" cy="342.8" r="2" fill="url(#og2)" opacity=".8"/>
<circle cx="631.2" cy="342.8" r="3.3" fill="none" stroke="#ff3010" stroke-width="1"/>
<circle cx="630.0" cy="342.8" r="3.3" fill="none" stroke="#30e030" stroke-width="1.1"/>
<circle cx="630.7" cy="342.8" r="3.3" fill="none" stroke="#e8f028" stroke-width="1" opacity=".85"/>
<circle cx="652.1" cy="243" r="2" fill="url(#og2)" opacity=".8"/>
<circle cx="652.6" cy="243" r="3.3" fill="none" stroke="#ff3010" stroke-width="1"/>
<circle cx="651.4" cy="243" r="3.3" fill="none" stroke="#30e030" stroke-width="1.1"/>
<circle cx="652.1" cy="243" r="3.3" fill="none" stroke="#e8f028" stroke-width="1" opacity=".85"/>
<circle cx="597.7" cy="421.4" r="3" fill="url(#og2)"/>
<circle cx="596.4" cy="421.7" r="3.3" fill="none" stroke="#ff2010" stroke-width="1.1"/>
<circle cx="599.0" cy="420.9" r="3.3" fill="none" stroke="#30e030" stroke-width="1.1"/>
<circle cx="597.7" cy="421.4" r="3.3" fill="none" stroke="#f0d820" stroke-width="1"/>
<circle cx="648" cy="146.2" r="2" fill="url(#og2)" opacity=".8"/>
<circle cx="648.5" cy="146.2" r="3.3" fill="none" stroke="#ff3010" stroke-width="1"/>
<circle cx="647.3" cy="146.2" r="3.3" fill="none" stroke="#30e030" stroke-width="1.1"/>
<circle cx="648" cy="146.2" r="3.3" fill="none" stroke="#e8f028" stroke-width="1" opacity=".85"/>
<circle cx="671" cy="137.6" r="2" fill="url(#og2)" opacity=".8"/>
<circle cx="671.5" cy="137.6" r="3.3" fill="none" stroke="#ff3010" stroke-width="1"/>
<circle cx="670.3" cy="137.6" r="3.3" fill="none" stroke="#30e030" stroke-width="1.1"/>
<circle cx="671" cy="137.6" r="3.3" fill="none" stroke="#e8f028" stroke-width="1" opacity=".85"/>
<circle cx="657.9" cy="330.5" r="2" fill="url(#og2)" opacity=".8"/>
<circle cx="658.4" cy="330.5" r="3.3" fill="none" stroke="#ff3010" stroke-width="1"/>
<circle cx="657.2" cy="330.5" r="3.3" fill="none" stroke="#30e030" stroke-width="1.1"/>
<circle cx="657.9" cy="330.5" r="3.3" fill="none" stroke="#e8f028" stroke-width="1" opacity=".85"/>
<circle cx="568.2" cy="136.6" r="4" fill="url(#rg2)" opacity=".7"/><circle cx="568.2" cy="136.6" r="2.3" fill="#a01010"/>
<circle cx="568.2" cy="136.6" r="3.3" fill="none" stroke="#ff1a1a" stroke-width="1.1"/>
<circle cx="513.4" cy="167.7" r="4" fill="url(#rg2)" opacity=".7"/><circle cx="513.4" cy="167.7" r="2.3" fill="#a01010"/>
<circle cx="513.4" cy="167.7" r="3.3" fill="none" stroke="#ff1a1a" stroke-width="1.1"/>
<circle cx="535.3" cy="166.2" r="4" fill="url(#rg2)" opacity=".7"/><circle cx="535.3" cy="166.2" r="2.3" fill="#a01010"/>
<circle cx="535.3" cy="166.2" r="3.3" fill="none" stroke="#ff1a1a" stroke-width="1.1"/>
<circle cx="573.1" cy="173" r="2" fill="#501008" opacity=".8"/>
<circle cx="573.1" cy="173" r="3.3" fill="none" stroke="#ff1a1a" stroke-width="1.1"/>
<circle cx="644.6" cy="153.4" r="4" fill="url(#rg2)" opacity=".7"/><circle cx="644.6" cy="153.4" r="2.3" fill="#a01010"/>
<circle cx="644.6" cy="153.4" r="3.3" fill="none" stroke="#ff1a1a" stroke-width="1.1"/>
<circle cx="696.1" cy="141.1" r="2" fill="#501008" opacity=".8"/>
<circle cx="696.1" cy="141.1" r="3.3" fill="none" stroke="#ff1a1a" stroke-width="1.1"/>
<circle cx="701.6" cy="140" r="2" fill="#501008" opacity=".8"/>
<circle cx="701.6" cy="140" r="3.3" fill="none" stroke="#ff1a1a" stroke-width="1.1"/>
<circle cx="701.2" cy="145.2" r="2" fill="#501008" opacity=".8"/>
<circle cx="701.2" cy="145.2" r="3.3" fill="none" stroke="#ff1a1a" stroke-width="1.1"/>
<circle cx="512.4" cy="240.5" r="4.2" fill="url(#rg2)"/><circle cx="512.4" cy="240.5" r="2.6" fill="#f01010"/>
<circle cx="512.4" cy="240.5" r="3.3" fill="none" stroke="#ff1a1a" stroke-width="1.1"/>
<circle cx="537" cy="265.8" r="4.2" fill="url(#rg2)"/><circle cx="537" cy="265.8" r="2.6" fill="#f01010"/>
<circle cx="537" cy="265.8" r="3.3" fill="none" stroke="#ff1a1a" stroke-width="1.1"/>
<circle cx="678.7" cy="270.6" r="2" fill="#501008" opacity=".8"/>
<circle cx="678.7" cy="270.6" r="3.3" fill="none" stroke="#ff1a1a" stroke-width="1.1"/>
<circle cx="629.2" cy="282.8" r="2" fill="#501008" opacity=".8"/>
<circle cx="629.2" cy="282.8" r="3.3" fill="none" stroke="#ff1a1a" stroke-width="1.1"/>
<circle cx="701.2" cy="289.4" r="2" fill="#501008" opacity=".8"/>
<circle cx="701.2" cy="289.4" r="3.3" fill="none" stroke="#ff1a1a" stroke-width="1.1"/>
<circle cx="528.3" cy="309.8" r="4.2" fill="url(#rg2)"/><circle cx="528.3" cy="309.8" r="2.6" fill="#f01010"/>
<circle cx="528.3" cy="309.8" r="3.3" fill="none" stroke="#ff1a1a" stroke-width="1.1"/>
<circle cx="678.7" cy="334.4" r="4" fill="url(#rg2)" opacity=".7"/><circle cx="678.7" cy="334.4" r="2.3" fill="#a01010"/>
<circle cx="678.7" cy="334.4" r="3.3" fill="none" stroke="#ff1a1a" stroke-width="1.1"/>
<circle cx="521.3" cy="401.2" r="4.2" fill="url(#rg2)"/><circle cx="521.3" cy="401.2" r="2.6" fill="#f01010"/>
<circle cx="521.3" cy="401.2" r="3.3" fill="none" stroke="#ff1a1a" stroke-width="1.1"/>
<circle cx="620" cy="166.2" r="2" fill="#0a400a" opacity=".8"/>
<circle cx="620" cy="166.2" r="3.3" fill="none" stroke="#22e022" stroke-width="1.1"/>
<circle cx="566" cy="174.8" r="2" fill="#0a400a" opacity=".8"/>
<circle cx="566" cy="174.8" r="3.3" fill="none" stroke="#22e022" stroke-width="1.1"/>
<circle cx="524.2" cy="214.7" r="2" fill="#0a400a" opacity=".8"/>
<circle cx="524.2" cy="214.7" r="3.3" fill="none" stroke="#22e022" stroke-width="1.1"/>
<circle cx="595.2" cy="218.4" r="2" fill="#0a400a" opacity=".8"/>
<circle cx="595.2" cy="218.4" r="3.3" fill="none" stroke="#22e022" stroke-width="1.1"/>
<circle cx="648" cy="225" r="4.2" fill="url(#gg2)" opacity=".8"/><circle cx="648" cy="225" r="2.4" fill="#10a010" opacity=".8"/>
<circle cx="648" cy="225" r="3.3" fill="none" stroke="#22e022" stroke-width="1.1"/>
<circle cx="605" cy="247.4" r="2" fill="#0a400a" opacity=".8"/>
<circle cx="605" cy="247.4" r="3.3" fill="none" stroke="#22e022" stroke-width="1.1"/>
<circle cx="580.5" cy="337" r="4.2" fill="url(#gg2)" opacity=".8"/><circle cx="580.5" cy="337" r="2.4" fill="#10a010" opacity=".8"/>
<circle cx="580.5" cy="337" r="3.3" fill="none" stroke="#22e022" stroke-width="1.1"/>
<circle cx="528.7" cy="397.5" r="2" fill="#0a400a" opacity=".8"/>
<circle cx="528.7" cy="397.5" r="3.3" fill="none" stroke="#22e022" stroke-width="1.1"/>
<circle cx="527.2" cy="411.8" r="2" fill="#0a400a" opacity=".8"/>
<circle cx="527.2" cy="411.8" r="3.3" fill="none" stroke="#22e022" stroke-width="1.1"/>
<rect x="502.6" y="116.6" width="210.89999999999998" height="326.5" fill="none" stroke="#d4d4d4" stroke-width="1"/>
<path d="M502.6 149.7 h3.5 M713.5 149.7 h-3.5" stroke="#d4d4d4" stroke-width="1"/>
<path d="M502.6 208.6 h3.5 M713.5 208.6 h-3.5" stroke="#d4d4d4" stroke-width="1"/>
<path d="M502.6 267.5 h3.5 M713.5 267.5 h-3.5" stroke="#d4d4d4" stroke-width="1"/>
<path d="M502.6 326.4 h3.5 M713.5 326.4 h-3.5" stroke="#d4d4d4" stroke-width="1"/>
<path d="M502.6 385.3 h3.5 M713.5 385.3 h-3.5" stroke="#d4d4d4" stroke-width="1"/>
<path d="M560.3 443.1 v-4 M560.3 116.6 v3.5" stroke="#d4d4d4" stroke-width="1"/>
<path d="M619.2 443.1 v-4 M619.2 116.6 v3.5" stroke="#d4d4d4" stroke-width="1"/>
<path d="M678.1 443.1 v-4 M678.1 116.6 v3.5" stroke="#d4d4d4" stroke-width="1"/>
</svg>
<div class="wt" style="left:578.2px;top:263.4px;font-size:10.2px;color:#e4e4e4">1</div>
<div class="wt" style="left:575.8px;top:286.4px;font-size:10.2px;color:#e4e4e4">2</div>
<div class="wt" style="left:594.6px;top:271.6px;font-size:10.2px;color:#e4e4e4">3</div>
<div class="wt" style="left:552.3px;top:331.6px;font-size:10.2px;color:#e4e4e4">4</div>
<div class="wt" style="left:581.3px;top:176.1px;font-size:10.2px;color:#e4e4e4">5</div>
<div class="wt" style="left:599.9px;top:204.8px;font-size:10.2px;color:#e4e4e4">6</div>
<div class="wt" style="left:608.2px;top:178.1px;font-size:10.2px;color:#e4e4e4">7</div>
<div class="wt" style="left:512.0px;top:244.0px;font-size:10.2px;color:#e4e4e4">8</div>
<div class="wt" style="left:604.7px;top:188.8px;font-size:10.2px;color:#e4e4e4">9</div>
<div class="wt" style="left:615.9px;top:258.9px;font-size:10.2px;color:#e4e4e4">10</div>
<div class="wt" style="left:611.8px;top:225.6px;font-size:10.2px;color:#e4e4e4">11</div>
<div class="wt" style="left:579.4px;top:124.4px;font-size:10.2px;color:#e4e4e4">12</div>
<div class="wt" style="left:607.7px;top:205.2px;font-size:10.2px;color:#e4e4e4">13</div>
<div class="wt" style="left:608.1px;top:343.2px;font-size:10.2px;color:#e4e4e4">14</div>
<div class="wt" style="left:508.4px;top:170.0px;font-size:10.2px;color:#e4e4e4">15</div>
<div class="wt" style="left:593.3px;top:365.4px;font-size:10.2px;color:#e4e4e4">16</div>
<div class="wt" style="left:558.4px;top:389.4px;font-size:10.2px;color:#e4e4e4">17</div>
<div class="wt" style="left:600.4px;top:368.2px;font-size:10.2px;color:#e4e4e4">18</div>
<div class="wt" style="left:620.0px;top:331.6px;font-size:10.2px;color:#e4e4e4">19</div>
<div class="wt" style="left:641.4px;top:231.8px;font-size:10.2px;color:#e4e4e4">20</div>
<div class="wt" style="left:587.0px;top:410.2px;font-size:10.2px;color:#e4e4e4">21</div>
<div class="wt" style="left:637.3px;top:135.0px;font-size:10.2px;color:#e4e4e4">22</div>
<div class="wt" style="left:660.3px;top:126.4px;font-size:10.2px;color:#e4e4e4">23</div>
<div class="wt" style="left:647.2px;top:319.3px;font-size:10.2px;color:#e4e4e4">24</div>
<div class="wt" style="left:480.6px;top:144.7px;width:18px;text-align:right;font-size:9.9px;letter-spacing:-.2px">250</div>
<div class="wt" style="left:480.6px;top:203.6px;width:18px;text-align:right;font-size:9.9px;letter-spacing:-.2px">200</div>
<div class="wt" style="left:480.6px;top:262.5px;width:18px;text-align:right;font-size:9.9px;letter-spacing:-.2px">150</div>
<div class="wt" style="left:480.6px;top:321.4px;width:18px;text-align:right;font-size:9.9px;letter-spacing:-.2px">100</div>
<div class="wt" style="left:480.6px;top:380.3px;width:18px;text-align:right;font-size:9.9px;letter-spacing:-.2px">50</div>
<div class="wt" style="left:550.3px;top:446.6px;width:20px;text-align:center;font-size:9.9px;letter-spacing:-.2px">50</div>
<div class="wt" style="left:609.2px;top:446.6px;width:20px;text-align:center;font-size:9.9px;letter-spacing:-.2px">100</div>
<div class="wt" style="left:668.1px;top:446.6px;width:20px;text-align:center;font-size:9.9px;letter-spacing:-.2px">150</div>
<!--/ROIIMG-->

<!-- status -->
<div class="t" style="left:714.8px;top:470.4px;font-size:8.1px;color:#2a2a2a">Memory usage: 45%</div>

<svg class="a" style="left:0;top:0" width="800" height="489"><ellipse cx="180.9" cy="52.2" rx="22.8" ry="24.9" transform="rotate(-10 180.9 52.2)" fill="none" stroke="#ec1c24" stroke-width="1.7"/></svg>
</body></html>
